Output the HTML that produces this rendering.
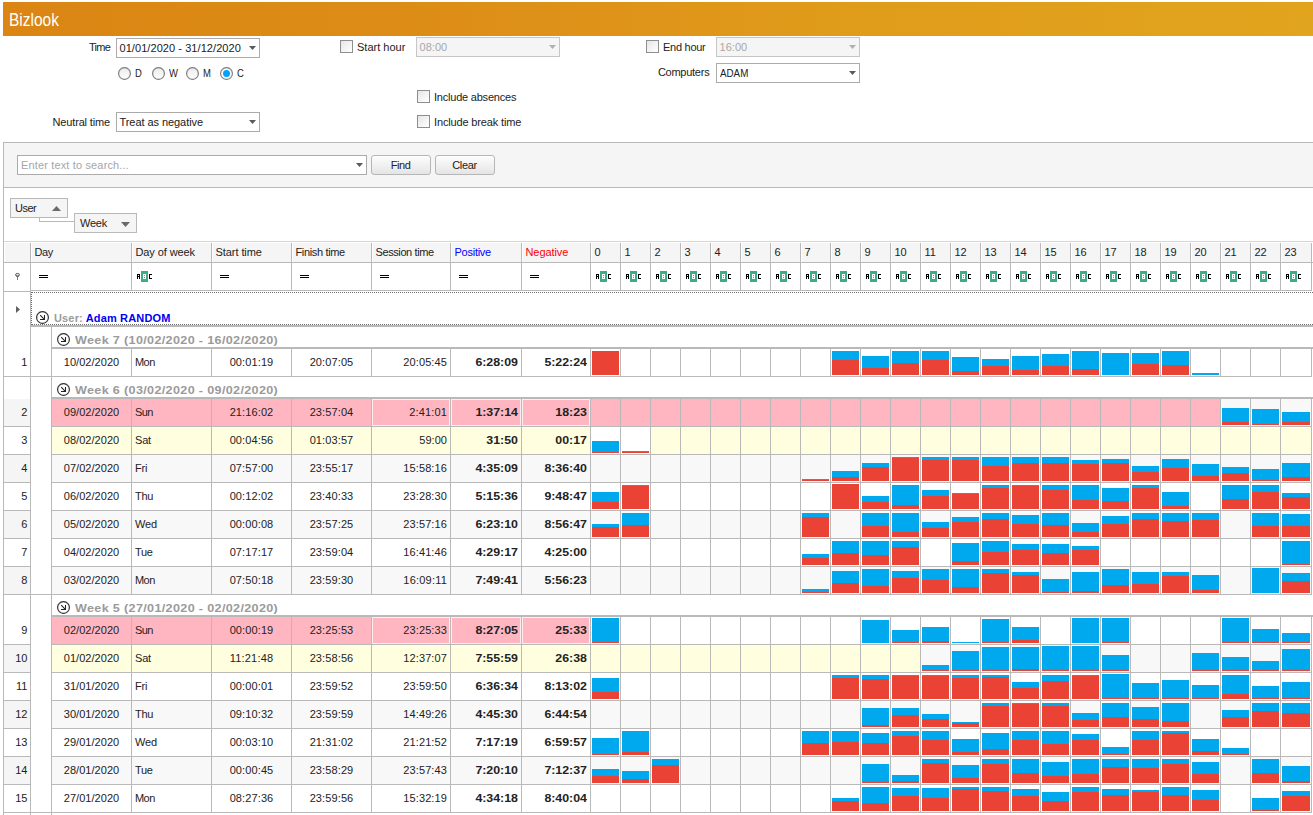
<!DOCTYPE html>
<html><head><meta charset="utf-8"><title>Bizlook</title>
<style>
html,body{margin:0;padding:0;background:#fff;}
body{width:1313px;height:815px;overflow:hidden;position:relative;font-family:"Liberation Sans",sans-serif;font-size:11px;color:#222;}
div,svg.a{position:absolute;}
.t{white-space:nowrap;overflow:visible;}
.b{transform:scaleX(1.124);transform-origin:100% 50%;}
.gw{transform:scaleX(1.144);transform-origin:0 50%;letter-spacing:.3px;}
</style></head><body>
<div style="left:3px;top:2px;width:1310px;height:34px;background:linear-gradient(90deg,#da8514 0%,#dd8e17 35%,#e09c1b 65%,#e1a41d 100%)"></div>
<div class="t" style="left:9.3px;top:8.6px;width:120px;height:22px;line-height:22px;color:#fff;font-size:17.5px;transform:scaleX(.885);transform-origin:0 50%">Bizlook</div>
<div class="t" style="left:60px;top:37px;width:50px;height:20px;line-height:20px;text-align:right;letter-spacing:-0.762px">Time</div>
<div style="left:116px;top:38px;width:144px;height:20px;background:#fff;border:1px solid #ababab;box-sizing:border-box"></div>
<div class="t" style="left:119.5px;top:38px;width:124px;height:20px;line-height:20px;color:#202020;letter-spacing:0.066px">01/01/2020 - 31/12/2020</div>
<svg class="a" style="left:249px;top:46px" width="7" height="4" viewBox="0 0 7 4"><path d="M0 0H7L3.5 4Z" fill="#5a5a5a"/></svg>
<svg class="a" style="left:118px;top:67px" width="13" height="13" viewBox="0 0 13 13"><defs><linearGradient id="rg" x1="0" y1="0" x2="0" y2="1"><stop offset="0" stop-color="#ebebeb"/><stop offset="1" stop-color="#fff"/></linearGradient></defs><circle cx="6.5" cy="6.5" r="5.9" fill="url(#rg)" stroke="#858585" stroke-width="1.25"/></svg>
<div class="t" style="left:134.6px;top:63px;width:20px;height:20px;line-height:20px;transform:scaleX(.86);transform-origin:0 50%">D</div>
<svg class="a" style="left:152px;top:67px" width="13" height="13" viewBox="0 0 13 13"><defs><linearGradient id="rg" x1="0" y1="0" x2="0" y2="1"><stop offset="0" stop-color="#ebebeb"/><stop offset="1" stop-color="#fff"/></linearGradient></defs><circle cx="6.5" cy="6.5" r="5.9" fill="url(#rg)" stroke="#858585" stroke-width="1.25"/></svg>
<div class="t" style="left:168.6px;top:63px;width:20px;height:20px;line-height:20px;transform:scaleX(.86);transform-origin:0 50%">W</div>
<svg class="a" style="left:186px;top:67px" width="13" height="13" viewBox="0 0 13 13"><defs><linearGradient id="rg" x1="0" y1="0" x2="0" y2="1"><stop offset="0" stop-color="#ebebeb"/><stop offset="1" stop-color="#fff"/></linearGradient></defs><circle cx="6.5" cy="6.5" r="5.9" fill="url(#rg)" stroke="#858585" stroke-width="1.25"/></svg>
<div class="t" style="left:202.6px;top:63px;width:20px;height:20px;line-height:20px;transform:scaleX(.86);transform-origin:0 50%">M</div>
<svg class="a" style="left:220px;top:67px" width="13" height="13" viewBox="0 0 13 13"><defs><linearGradient id="rg" x1="0" y1="0" x2="0" y2="1"><stop offset="0" stop-color="#ebebeb"/><stop offset="1" stop-color="#fff"/></linearGradient></defs><circle cx="6.5" cy="6.5" r="5.9" fill="#fff" stroke="#858585" stroke-width="1.25"/><circle cx="6.5" cy="6.5" r="3.5" fill="#00a2ff"/></svg>
<div class="t" style="left:236.6px;top:63px;width:20px;height:20px;line-height:20px;transform:scaleX(.86);transform-origin:0 50%">C</div>
<div class="t" style="left:30px;top:112px;width:80px;height:20px;line-height:20px;text-align:right;letter-spacing:-0.150px">Neutral time</div>
<div style="left:116px;top:112px;width:144px;height:20px;background:#fff;border:1px solid #ababab;box-sizing:border-box"></div>
<div class="t" style="left:119.5px;top:112px;width:124px;height:20px;line-height:20px;color:#202020;letter-spacing:-0.064px">Treat as negative</div>
<svg class="a" style="left:249px;top:120px" width="7" height="4" viewBox="0 0 7 4"><path d="M0 0H7L3.5 4Z" fill="#5a5a5a"/></svg>
<div style="left:340px;top:40px;width:13px;height:13px;box-sizing:border-box;border:1px solid #8e8e8e;background:linear-gradient(135deg,#e6e6e6 0%,#f4f4f4 55%,#fff 100%)"></div>
<div class="t" style="left:357px;top:37px;width:60px;height:20px;line-height:20px;;letter-spacing:-0.001px">Start hour</div>
<div style="left:416px;top:37px;width:144px;height:20px;background:#f5f5f5;border:1px solid #c6c6c6;box-sizing:border-box"></div>
<div class="t" style="left:419.5px;top:37px;width:124px;height:20px;line-height:20px;color:#a8a8a8;letter-spacing:0.034px">08:00</div>
<svg class="a" style="left:549px;top:45px" width="7" height="4" viewBox="0 0 7 4"><path d="M0 0H7L3.5 4Z" fill="#b0b0b0"/></svg>
<div style="left:417px;top:90px;width:13px;height:13px;box-sizing:border-box;border:1px solid #8e8e8e;background:linear-gradient(135deg,#e6e6e6 0%,#f4f4f4 55%,#fff 100%)"></div>
<div class="t" style="left:434px;top:87px;width:120px;height:20px;line-height:20px;;letter-spacing:-0.214px">Include absences</div>
<div style="left:417px;top:115px;width:13px;height:13px;box-sizing:border-box;border:1px solid #8e8e8e;background:linear-gradient(135deg,#e6e6e6 0%,#f4f4f4 55%,#fff 100%)"></div>
<div class="t" style="left:434px;top:112px;width:120px;height:20px;line-height:20px;;letter-spacing:-0.149px">Include break time</div>
<div style="left:646px;top:40px;width:13px;height:13px;box-sizing:border-box;border:1px solid #8e8e8e;background:linear-gradient(135deg,#e6e6e6 0%,#f4f4f4 55%,#fff 100%)"></div>
<div class="t" style="left:663px;top:37px;width:60px;height:20px;line-height:20px;;letter-spacing:-0.270px">End hour</div>
<div style="left:716px;top:37px;width:144px;height:20px;background:#f5f5f5;border:1px solid #c6c6c6;box-sizing:border-box"></div>
<div class="t" style="left:719.5px;top:37px;width:124px;height:20px;line-height:20px;color:#a8a8a8;letter-spacing:0.034px">16:00</div>
<svg class="a" style="left:849px;top:45px" width="7" height="4" viewBox="0 0 7 4"><path d="M0 0H7L3.5 4Z" fill="#b0b0b0"/></svg>
<div class="t" style="left:639.4px;top:62px;width:70px;height:20px;line-height:20px;text-align:right;letter-spacing:-0.255px">Computers</div>
<div style="left:716px;top:63px;width:144px;height:20px;background:#fff;border:1px solid #ababab;box-sizing:border-box"></div>
<div class="t" style="left:719.5px;top:63px;width:124px;height:20px;line-height:20px;color:#202020;letter-spacing:0;transform:scaleX(.89);transform-origin:0 50%">ADAM</div>
<svg class="a" style="left:849px;top:71px" width="7" height="4" viewBox="0 0 7 4"><path d="M0 0H7L3.5 4Z" fill="#5a5a5a"/></svg>
<div style="left:4px;top:143px;width:1309px;height:44px;background:#f5f5f5"></div>
<div style="left:3px;top:142px;width:1310px;height:1px;background:#b9b9b9"></div>
<div style="left:3px;top:187px;width:1310px;height:1px;background:#b9b9b9"></div>
<div style="left:3px;top:142px;width:1px;height:673px;background:#b9b9b9"></div>
<div style="left:17px;top:155px;width:350px;height:20px;background:#fff;border:1px solid #ababab;box-sizing:border-box"></div>
<div class="t" style="left:21px;top:155px;width:300px;height:20px;line-height:20px;color:#a6a6a6;letter-spacing:0.149px">Enter text to search...</div>
<svg class="a" style="left:356px;top:163px" width="7" height="4" viewBox="0 0 7 4"><path d="M0 0H7L3.5 4Z" fill="#5a5a5a"/></svg>
<div style="left:371px;top:155px;width:60px;height:20px;box-sizing:border-box;border:1px solid #b6b6b6;border-radius:3px;background:linear-gradient(180deg,#fdfdfd 0%,#f0f0f0 55%,#e4e4e4 100%)"></div>
<div class="t" style="left:370.5px;top:155px;width:60px;height:20px;line-height:20px;text-align:center;letter-spacing:-0.427px">Find</div>
<div style="left:435px;top:155px;width:60px;height:20px;box-sizing:border-box;border:1px solid #b6b6b6;border-radius:3px;background:linear-gradient(180deg,#fdfdfd 0%,#f0f0f0 55%,#e4e4e4 100%)"></div>
<div class="t" style="left:434.5px;top:155px;width:60px;height:20px;line-height:20px;text-align:center;letter-spacing:-0.379px">Clear</div>
<div style="left:39px;top:218px;width:1px;height:4px;background:#b9b9b9"></div>
<div style="left:39px;top:221px;width:35px;height:1px;background:#b9b9b9"></div>
<div style="left:10px;top:198px;width:58px;height:20px;box-sizing:border-box;border:1px solid #b9b9b9;background:#f5f5f5"></div>
<div class="t" style="left:15px;top:198px;width:40px;height:20px;line-height:20px;;letter-spacing:-0.509px">User</div>
<svg class="a" style="left:52px;top:206px" width="9" height="5" viewBox="0 0 9 5"><path d="M0 5H9L4.5 0Z" fill="#6a6a6a"/></svg>
<div style="left:74px;top:213px;width:63px;height:20px;box-sizing:border-box;border:1px solid #b9b9b9;background:#f5f5f5"></div>
<div class="t" style="left:80px;top:213px;width:40px;height:20px;line-height:20px;;letter-spacing:-0.255px">Week</div>
<svg class="a" style="left:121px;top:222px" width="9" height="5" viewBox="0 0 9 5"><path d="M0 0H9L4.5 5Z" fill="#6a6a6a"/></svg>
<div style="left:5px;top:243px;width:1306px;height:19px;background:#f5f5f5"></div>
<div style="left:4px;top:241px;width:1309px;height:1px;background:#d6d6d6"></div>
<div style="left:4px;top:262px;width:1309px;height:1px;background:#b9b9b9"></div>
<div style="left:30px;top:243px;width:1px;height:572px;background:#b9b9b9"></div>
<div style="left:131px;top:243px;width:1px;height:48px;background:#b9b9b9"></div>
<div style="left:31px;top:243px;width:1px;height:19px;background:#fff"></div>
<div class="t" style="left:34.5px;top:242px;width:96px;height:20px;line-height:20px;;letter-spacing:-0.454px">Day</div>
<div style="left:211px;top:243px;width:1px;height:48px;background:#b9b9b9"></div>
<div style="left:132px;top:243px;width:1px;height:19px;background:#fff"></div>
<div class="t" style="left:135.5px;top:242px;width:75px;height:20px;line-height:20px;;letter-spacing:-0.094px">Day of week</div>
<div style="left:291px;top:243px;width:1px;height:48px;background:#b9b9b9"></div>
<div style="left:212px;top:243px;width:1px;height:19px;background:#fff"></div>
<div class="t" style="left:215.5px;top:242px;width:75px;height:20px;line-height:20px;;letter-spacing:-0.068px">Start time</div>
<div style="left:371px;top:243px;width:1px;height:48px;background:#b9b9b9"></div>
<div style="left:292px;top:243px;width:1px;height:19px;background:#fff"></div>
<div class="t" style="left:295.5px;top:242px;width:75px;height:20px;line-height:20px;;letter-spacing:-0.353px">Finish time</div>
<div style="left:450px;top:243px;width:1px;height:48px;background:#b9b9b9"></div>
<div style="left:372px;top:243px;width:1px;height:19px;background:#fff"></div>
<div class="t" style="left:375.5px;top:242px;width:74px;height:20px;line-height:20px;;letter-spacing:-0.399px">Session time</div>
<div style="left:521px;top:243px;width:1px;height:48px;background:#b9b9b9"></div>
<div style="left:451px;top:243px;width:1px;height:19px;background:#fff"></div>
<div class="t" style="left:454.5px;top:242px;width:66px;height:20px;line-height:20px;color:#0000ff;letter-spacing:-0.254px">Positive</div>
<div style="left:590px;top:243px;width:1px;height:48px;background:#b9b9b9"></div>
<div style="left:522px;top:243px;width:1px;height:19px;background:#fff"></div>
<div class="t" style="left:525.5px;top:242px;width:64px;height:20px;line-height:20px;color:#ff0000;letter-spacing:-0.090px">Negative</div>
<div style="left:620px;top:243px;width:1px;height:48px;background:#b9b9b9"></div>
<div style="left:591px;top:243px;width:1px;height:19px;background:#fff"></div>
<div class="t" style="left:594.5px;top:242px;width:25px;height:20px;line-height:20px;">0</div>
<div style="left:650px;top:243px;width:1px;height:48px;background:#b9b9b9"></div>
<div style="left:621px;top:243px;width:1px;height:19px;background:#fff"></div>
<div class="t" style="left:624.5px;top:242px;width:25px;height:20px;line-height:20px;">1</div>
<div style="left:680px;top:243px;width:1px;height:48px;background:#b9b9b9"></div>
<div style="left:651px;top:243px;width:1px;height:19px;background:#fff"></div>
<div class="t" style="left:654.5px;top:242px;width:25px;height:20px;line-height:20px;">2</div>
<div style="left:710px;top:243px;width:1px;height:48px;background:#b9b9b9"></div>
<div style="left:681px;top:243px;width:1px;height:19px;background:#fff"></div>
<div class="t" style="left:684.5px;top:242px;width:25px;height:20px;line-height:20px;">3</div>
<div style="left:740px;top:243px;width:1px;height:48px;background:#b9b9b9"></div>
<div style="left:711px;top:243px;width:1px;height:19px;background:#fff"></div>
<div class="t" style="left:714.5px;top:242px;width:25px;height:20px;line-height:20px;">4</div>
<div style="left:770px;top:243px;width:1px;height:48px;background:#b9b9b9"></div>
<div style="left:741px;top:243px;width:1px;height:19px;background:#fff"></div>
<div class="t" style="left:744.5px;top:242px;width:25px;height:20px;line-height:20px;">5</div>
<div style="left:800px;top:243px;width:1px;height:48px;background:#b9b9b9"></div>
<div style="left:771px;top:243px;width:1px;height:19px;background:#fff"></div>
<div class="t" style="left:774.5px;top:242px;width:25px;height:20px;line-height:20px;">6</div>
<div style="left:830px;top:243px;width:1px;height:48px;background:#b9b9b9"></div>
<div style="left:801px;top:243px;width:1px;height:19px;background:#fff"></div>
<div class="t" style="left:804.5px;top:242px;width:25px;height:20px;line-height:20px;">7</div>
<div style="left:860px;top:243px;width:1px;height:48px;background:#b9b9b9"></div>
<div style="left:831px;top:243px;width:1px;height:19px;background:#fff"></div>
<div class="t" style="left:834.5px;top:242px;width:25px;height:20px;line-height:20px;">8</div>
<div style="left:890px;top:243px;width:1px;height:48px;background:#b9b9b9"></div>
<div style="left:861px;top:243px;width:1px;height:19px;background:#fff"></div>
<div class="t" style="left:864.5px;top:242px;width:25px;height:20px;line-height:20px;">9</div>
<div style="left:920px;top:243px;width:1px;height:48px;background:#b9b9b9"></div>
<div style="left:891px;top:243px;width:1px;height:19px;background:#fff"></div>
<div class="t" style="left:894.5px;top:242px;width:25px;height:20px;line-height:20px;">10</div>
<div style="left:950px;top:243px;width:1px;height:48px;background:#b9b9b9"></div>
<div style="left:921px;top:243px;width:1px;height:19px;background:#fff"></div>
<div class="t" style="left:924.5px;top:242px;width:25px;height:20px;line-height:20px;">11</div>
<div style="left:980px;top:243px;width:1px;height:48px;background:#b9b9b9"></div>
<div style="left:951px;top:243px;width:1px;height:19px;background:#fff"></div>
<div class="t" style="left:954.5px;top:242px;width:25px;height:20px;line-height:20px;">12</div>
<div style="left:1010px;top:243px;width:1px;height:48px;background:#b9b9b9"></div>
<div style="left:981px;top:243px;width:1px;height:19px;background:#fff"></div>
<div class="t" style="left:984.5px;top:242px;width:25px;height:20px;line-height:20px;">13</div>
<div style="left:1040px;top:243px;width:1px;height:48px;background:#b9b9b9"></div>
<div style="left:1011px;top:243px;width:1px;height:19px;background:#fff"></div>
<div class="t" style="left:1014.5px;top:242px;width:25px;height:20px;line-height:20px;">14</div>
<div style="left:1070px;top:243px;width:1px;height:48px;background:#b9b9b9"></div>
<div style="left:1041px;top:243px;width:1px;height:19px;background:#fff"></div>
<div class="t" style="left:1044.5px;top:242px;width:25px;height:20px;line-height:20px;">15</div>
<div style="left:1100px;top:243px;width:1px;height:48px;background:#b9b9b9"></div>
<div style="left:1071px;top:243px;width:1px;height:19px;background:#fff"></div>
<div class="t" style="left:1074.5px;top:242px;width:25px;height:20px;line-height:20px;">16</div>
<div style="left:1130px;top:243px;width:1px;height:48px;background:#b9b9b9"></div>
<div style="left:1101px;top:243px;width:1px;height:19px;background:#fff"></div>
<div class="t" style="left:1104.5px;top:242px;width:25px;height:20px;line-height:20px;">17</div>
<div style="left:1160px;top:243px;width:1px;height:48px;background:#b9b9b9"></div>
<div style="left:1131px;top:243px;width:1px;height:19px;background:#fff"></div>
<div class="t" style="left:1134.5px;top:242px;width:25px;height:20px;line-height:20px;">18</div>
<div style="left:1190px;top:243px;width:1px;height:48px;background:#b9b9b9"></div>
<div style="left:1161px;top:243px;width:1px;height:19px;background:#fff"></div>
<div class="t" style="left:1164.5px;top:242px;width:25px;height:20px;line-height:20px;">19</div>
<div style="left:1220px;top:243px;width:1px;height:48px;background:#b9b9b9"></div>
<div style="left:1191px;top:243px;width:1px;height:19px;background:#fff"></div>
<div class="t" style="left:1194.5px;top:242px;width:25px;height:20px;line-height:20px;">20</div>
<div style="left:1250px;top:243px;width:1px;height:48px;background:#b9b9b9"></div>
<div style="left:1221px;top:243px;width:1px;height:19px;background:#fff"></div>
<div class="t" style="left:1224.5px;top:242px;width:25px;height:20px;line-height:20px;">21</div>
<div style="left:1280px;top:243px;width:1px;height:48px;background:#b9b9b9"></div>
<div style="left:1251px;top:243px;width:1px;height:19px;background:#fff"></div>
<div class="t" style="left:1254.5px;top:242px;width:25px;height:20px;line-height:20px;">22</div>
<div style="left:1311px;top:243px;width:1px;height:48px;background:#b9b9b9"></div>
<div style="left:1281px;top:243px;width:1px;height:19px;background:#fff"></div>
<div class="t" style="left:1284.5px;top:242px;width:26px;height:20px;line-height:20px;">23</div>
<div style="left:31px;top:290px;width:1281px;height:1px;background:#b9b9b9"></div>
<div style="left:4px;top:291px;width:26px;height:1px;background:#b9b9b9"></div>
<svg class="a" style="left:14px;top:272px" width="7" height="9" viewBox="0 0 7 9"><path d="M1.2 3.2H5.8L3.9 5.3V8H3.1V5.3Z" fill="#606060"/><ellipse cx="3.5" cy="2.7" rx="2.0" ry="1.3" fill="#e4e4e4" stroke="#5c5c5c" stroke-width="1"/></svg>
<div style="left:39px;top:275px;width:9px;height:1px;background:#000"></div>
<div style="left:39px;top:277px;width:9px;height:1px;background:#000"></div>
<svg class="a" style="left:137px;top:271px" width="15" height="11" viewBox="0 0 15 11" shape-rendering="crispEdges"><rect x="4" y="0" width="7" height="11" rx="1" fill="#3fab87"/><g fill="#000"><rect x="0" y="3" width="3" height="1"/><rect x="0" y="5" width="3" height="1"/><rect x="0" y="3" width="1" height="5"/><rect x="2" y="3" width="1" height="5"/><rect x="12" y="3" width="3" height="1"/><rect x="12" y="7" width="3" height="1"/><rect x="12" y="3" width="1" height="5"/></g><g fill="#fff"><rect x="6" y="3" width="3" height="5"/></g><g fill="#3fab87"><rect x="7" y="4" width="1" height="1"/><rect x="7" y="6" width="1" height="1"/></g></svg>
<div style="left:220px;top:275px;width:9px;height:1px;background:#000"></div>
<div style="left:220px;top:277px;width:9px;height:1px;background:#000"></div>
<div style="left:300px;top:275px;width:9px;height:1px;background:#000"></div>
<div style="left:300px;top:277px;width:9px;height:1px;background:#000"></div>
<div style="left:380px;top:275px;width:9px;height:1px;background:#000"></div>
<div style="left:380px;top:277px;width:9px;height:1px;background:#000"></div>
<div style="left:459px;top:275px;width:9px;height:1px;background:#000"></div>
<div style="left:459px;top:277px;width:9px;height:1px;background:#000"></div>
<div style="left:530px;top:275px;width:9px;height:1px;background:#000"></div>
<div style="left:530px;top:277px;width:9px;height:1px;background:#000"></div>
<svg class="a" style="left:596px;top:271px" width="15" height="11" viewBox="0 0 15 11" shape-rendering="crispEdges"><rect x="4" y="0" width="7" height="11" rx="1" fill="#3fab87"/><g fill="#000"><rect x="0" y="3" width="3" height="1"/><rect x="0" y="5" width="3" height="1"/><rect x="0" y="3" width="1" height="5"/><rect x="2" y="3" width="1" height="5"/><rect x="12" y="3" width="3" height="1"/><rect x="12" y="7" width="3" height="1"/><rect x="12" y="3" width="1" height="5"/></g><g fill="#fff"><rect x="6" y="3" width="3" height="5"/></g><g fill="#3fab87"><rect x="7" y="4" width="1" height="1"/><rect x="7" y="6" width="1" height="1"/></g></svg>
<svg class="a" style="left:626px;top:271px" width="15" height="11" viewBox="0 0 15 11" shape-rendering="crispEdges"><rect x="4" y="0" width="7" height="11" rx="1" fill="#3fab87"/><g fill="#000"><rect x="0" y="3" width="3" height="1"/><rect x="0" y="5" width="3" height="1"/><rect x="0" y="3" width="1" height="5"/><rect x="2" y="3" width="1" height="5"/><rect x="12" y="3" width="3" height="1"/><rect x="12" y="7" width="3" height="1"/><rect x="12" y="3" width="1" height="5"/></g><g fill="#fff"><rect x="6" y="3" width="3" height="5"/></g><g fill="#3fab87"><rect x="7" y="4" width="1" height="1"/><rect x="7" y="6" width="1" height="1"/></g></svg>
<svg class="a" style="left:656px;top:271px" width="15" height="11" viewBox="0 0 15 11" shape-rendering="crispEdges"><rect x="4" y="0" width="7" height="11" rx="1" fill="#3fab87"/><g fill="#000"><rect x="0" y="3" width="3" height="1"/><rect x="0" y="5" width="3" height="1"/><rect x="0" y="3" width="1" height="5"/><rect x="2" y="3" width="1" height="5"/><rect x="12" y="3" width="3" height="1"/><rect x="12" y="7" width="3" height="1"/><rect x="12" y="3" width="1" height="5"/></g><g fill="#fff"><rect x="6" y="3" width="3" height="5"/></g><g fill="#3fab87"><rect x="7" y="4" width="1" height="1"/><rect x="7" y="6" width="1" height="1"/></g></svg>
<svg class="a" style="left:686px;top:271px" width="15" height="11" viewBox="0 0 15 11" shape-rendering="crispEdges"><rect x="4" y="0" width="7" height="11" rx="1" fill="#3fab87"/><g fill="#000"><rect x="0" y="3" width="3" height="1"/><rect x="0" y="5" width="3" height="1"/><rect x="0" y="3" width="1" height="5"/><rect x="2" y="3" width="1" height="5"/><rect x="12" y="3" width="3" height="1"/><rect x="12" y="7" width="3" height="1"/><rect x="12" y="3" width="1" height="5"/></g><g fill="#fff"><rect x="6" y="3" width="3" height="5"/></g><g fill="#3fab87"><rect x="7" y="4" width="1" height="1"/><rect x="7" y="6" width="1" height="1"/></g></svg>
<svg class="a" style="left:716px;top:271px" width="15" height="11" viewBox="0 0 15 11" shape-rendering="crispEdges"><rect x="4" y="0" width="7" height="11" rx="1" fill="#3fab87"/><g fill="#000"><rect x="0" y="3" width="3" height="1"/><rect x="0" y="5" width="3" height="1"/><rect x="0" y="3" width="1" height="5"/><rect x="2" y="3" width="1" height="5"/><rect x="12" y="3" width="3" height="1"/><rect x="12" y="7" width="3" height="1"/><rect x="12" y="3" width="1" height="5"/></g><g fill="#fff"><rect x="6" y="3" width="3" height="5"/></g><g fill="#3fab87"><rect x="7" y="4" width="1" height="1"/><rect x="7" y="6" width="1" height="1"/></g></svg>
<svg class="a" style="left:746px;top:271px" width="15" height="11" viewBox="0 0 15 11" shape-rendering="crispEdges"><rect x="4" y="0" width="7" height="11" rx="1" fill="#3fab87"/><g fill="#000"><rect x="0" y="3" width="3" height="1"/><rect x="0" y="5" width="3" height="1"/><rect x="0" y="3" width="1" height="5"/><rect x="2" y="3" width="1" height="5"/><rect x="12" y="3" width="3" height="1"/><rect x="12" y="7" width="3" height="1"/><rect x="12" y="3" width="1" height="5"/></g><g fill="#fff"><rect x="6" y="3" width="3" height="5"/></g><g fill="#3fab87"><rect x="7" y="4" width="1" height="1"/><rect x="7" y="6" width="1" height="1"/></g></svg>
<svg class="a" style="left:776px;top:271px" width="15" height="11" viewBox="0 0 15 11" shape-rendering="crispEdges"><rect x="4" y="0" width="7" height="11" rx="1" fill="#3fab87"/><g fill="#000"><rect x="0" y="3" width="3" height="1"/><rect x="0" y="5" width="3" height="1"/><rect x="0" y="3" width="1" height="5"/><rect x="2" y="3" width="1" height="5"/><rect x="12" y="3" width="3" height="1"/><rect x="12" y="7" width="3" height="1"/><rect x="12" y="3" width="1" height="5"/></g><g fill="#fff"><rect x="6" y="3" width="3" height="5"/></g><g fill="#3fab87"><rect x="7" y="4" width="1" height="1"/><rect x="7" y="6" width="1" height="1"/></g></svg>
<svg class="a" style="left:806px;top:271px" width="15" height="11" viewBox="0 0 15 11" shape-rendering="crispEdges"><rect x="4" y="0" width="7" height="11" rx="1" fill="#3fab87"/><g fill="#000"><rect x="0" y="3" width="3" height="1"/><rect x="0" y="5" width="3" height="1"/><rect x="0" y="3" width="1" height="5"/><rect x="2" y="3" width="1" height="5"/><rect x="12" y="3" width="3" height="1"/><rect x="12" y="7" width="3" height="1"/><rect x="12" y="3" width="1" height="5"/></g><g fill="#fff"><rect x="6" y="3" width="3" height="5"/></g><g fill="#3fab87"><rect x="7" y="4" width="1" height="1"/><rect x="7" y="6" width="1" height="1"/></g></svg>
<svg class="a" style="left:836px;top:271px" width="15" height="11" viewBox="0 0 15 11" shape-rendering="crispEdges"><rect x="4" y="0" width="7" height="11" rx="1" fill="#3fab87"/><g fill="#000"><rect x="0" y="3" width="3" height="1"/><rect x="0" y="5" width="3" height="1"/><rect x="0" y="3" width="1" height="5"/><rect x="2" y="3" width="1" height="5"/><rect x="12" y="3" width="3" height="1"/><rect x="12" y="7" width="3" height="1"/><rect x="12" y="3" width="1" height="5"/></g><g fill="#fff"><rect x="6" y="3" width="3" height="5"/></g><g fill="#3fab87"><rect x="7" y="4" width="1" height="1"/><rect x="7" y="6" width="1" height="1"/></g></svg>
<svg class="a" style="left:866px;top:271px" width="15" height="11" viewBox="0 0 15 11" shape-rendering="crispEdges"><rect x="4" y="0" width="7" height="11" rx="1" fill="#3fab87"/><g fill="#000"><rect x="0" y="3" width="3" height="1"/><rect x="0" y="5" width="3" height="1"/><rect x="0" y="3" width="1" height="5"/><rect x="2" y="3" width="1" height="5"/><rect x="12" y="3" width="3" height="1"/><rect x="12" y="7" width="3" height="1"/><rect x="12" y="3" width="1" height="5"/></g><g fill="#fff"><rect x="6" y="3" width="3" height="5"/></g><g fill="#3fab87"><rect x="7" y="4" width="1" height="1"/><rect x="7" y="6" width="1" height="1"/></g></svg>
<svg class="a" style="left:896px;top:271px" width="15" height="11" viewBox="0 0 15 11" shape-rendering="crispEdges"><rect x="4" y="0" width="7" height="11" rx="1" fill="#3fab87"/><g fill="#000"><rect x="0" y="3" width="3" height="1"/><rect x="0" y="5" width="3" height="1"/><rect x="0" y="3" width="1" height="5"/><rect x="2" y="3" width="1" height="5"/><rect x="12" y="3" width="3" height="1"/><rect x="12" y="7" width="3" height="1"/><rect x="12" y="3" width="1" height="5"/></g><g fill="#fff"><rect x="6" y="3" width="3" height="5"/></g><g fill="#3fab87"><rect x="7" y="4" width="1" height="1"/><rect x="7" y="6" width="1" height="1"/></g></svg>
<svg class="a" style="left:926px;top:271px" width="15" height="11" viewBox="0 0 15 11" shape-rendering="crispEdges"><rect x="4" y="0" width="7" height="11" rx="1" fill="#3fab87"/><g fill="#000"><rect x="0" y="3" width="3" height="1"/><rect x="0" y="5" width="3" height="1"/><rect x="0" y="3" width="1" height="5"/><rect x="2" y="3" width="1" height="5"/><rect x="12" y="3" width="3" height="1"/><rect x="12" y="7" width="3" height="1"/><rect x="12" y="3" width="1" height="5"/></g><g fill="#fff"><rect x="6" y="3" width="3" height="5"/></g><g fill="#3fab87"><rect x="7" y="4" width="1" height="1"/><rect x="7" y="6" width="1" height="1"/></g></svg>
<svg class="a" style="left:956px;top:271px" width="15" height="11" viewBox="0 0 15 11" shape-rendering="crispEdges"><rect x="4" y="0" width="7" height="11" rx="1" fill="#3fab87"/><g fill="#000"><rect x="0" y="3" width="3" height="1"/><rect x="0" y="5" width="3" height="1"/><rect x="0" y="3" width="1" height="5"/><rect x="2" y="3" width="1" height="5"/><rect x="12" y="3" width="3" height="1"/><rect x="12" y="7" width="3" height="1"/><rect x="12" y="3" width="1" height="5"/></g><g fill="#fff"><rect x="6" y="3" width="3" height="5"/></g><g fill="#3fab87"><rect x="7" y="4" width="1" height="1"/><rect x="7" y="6" width="1" height="1"/></g></svg>
<svg class="a" style="left:986px;top:271px" width="15" height="11" viewBox="0 0 15 11" shape-rendering="crispEdges"><rect x="4" y="0" width="7" height="11" rx="1" fill="#3fab87"/><g fill="#000"><rect x="0" y="3" width="3" height="1"/><rect x="0" y="5" width="3" height="1"/><rect x="0" y="3" width="1" height="5"/><rect x="2" y="3" width="1" height="5"/><rect x="12" y="3" width="3" height="1"/><rect x="12" y="7" width="3" height="1"/><rect x="12" y="3" width="1" height="5"/></g><g fill="#fff"><rect x="6" y="3" width="3" height="5"/></g><g fill="#3fab87"><rect x="7" y="4" width="1" height="1"/><rect x="7" y="6" width="1" height="1"/></g></svg>
<svg class="a" style="left:1016px;top:271px" width="15" height="11" viewBox="0 0 15 11" shape-rendering="crispEdges"><rect x="4" y="0" width="7" height="11" rx="1" fill="#3fab87"/><g fill="#000"><rect x="0" y="3" width="3" height="1"/><rect x="0" y="5" width="3" height="1"/><rect x="0" y="3" width="1" height="5"/><rect x="2" y="3" width="1" height="5"/><rect x="12" y="3" width="3" height="1"/><rect x="12" y="7" width="3" height="1"/><rect x="12" y="3" width="1" height="5"/></g><g fill="#fff"><rect x="6" y="3" width="3" height="5"/></g><g fill="#3fab87"><rect x="7" y="4" width="1" height="1"/><rect x="7" y="6" width="1" height="1"/></g></svg>
<svg class="a" style="left:1046px;top:271px" width="15" height="11" viewBox="0 0 15 11" shape-rendering="crispEdges"><rect x="4" y="0" width="7" height="11" rx="1" fill="#3fab87"/><g fill="#000"><rect x="0" y="3" width="3" height="1"/><rect x="0" y="5" width="3" height="1"/><rect x="0" y="3" width="1" height="5"/><rect x="2" y="3" width="1" height="5"/><rect x="12" y="3" width="3" height="1"/><rect x="12" y="7" width="3" height="1"/><rect x="12" y="3" width="1" height="5"/></g><g fill="#fff"><rect x="6" y="3" width="3" height="5"/></g><g fill="#3fab87"><rect x="7" y="4" width="1" height="1"/><rect x="7" y="6" width="1" height="1"/></g></svg>
<svg class="a" style="left:1076px;top:271px" width="15" height="11" viewBox="0 0 15 11" shape-rendering="crispEdges"><rect x="4" y="0" width="7" height="11" rx="1" fill="#3fab87"/><g fill="#000"><rect x="0" y="3" width="3" height="1"/><rect x="0" y="5" width="3" height="1"/><rect x="0" y="3" width="1" height="5"/><rect x="2" y="3" width="1" height="5"/><rect x="12" y="3" width="3" height="1"/><rect x="12" y="7" width="3" height="1"/><rect x="12" y="3" width="1" height="5"/></g><g fill="#fff"><rect x="6" y="3" width="3" height="5"/></g><g fill="#3fab87"><rect x="7" y="4" width="1" height="1"/><rect x="7" y="6" width="1" height="1"/></g></svg>
<svg class="a" style="left:1106px;top:271px" width="15" height="11" viewBox="0 0 15 11" shape-rendering="crispEdges"><rect x="4" y="0" width="7" height="11" rx="1" fill="#3fab87"/><g fill="#000"><rect x="0" y="3" width="3" height="1"/><rect x="0" y="5" width="3" height="1"/><rect x="0" y="3" width="1" height="5"/><rect x="2" y="3" width="1" height="5"/><rect x="12" y="3" width="3" height="1"/><rect x="12" y="7" width="3" height="1"/><rect x="12" y="3" width="1" height="5"/></g><g fill="#fff"><rect x="6" y="3" width="3" height="5"/></g><g fill="#3fab87"><rect x="7" y="4" width="1" height="1"/><rect x="7" y="6" width="1" height="1"/></g></svg>
<svg class="a" style="left:1136px;top:271px" width="15" height="11" viewBox="0 0 15 11" shape-rendering="crispEdges"><rect x="4" y="0" width="7" height="11" rx="1" fill="#3fab87"/><g fill="#000"><rect x="0" y="3" width="3" height="1"/><rect x="0" y="5" width="3" height="1"/><rect x="0" y="3" width="1" height="5"/><rect x="2" y="3" width="1" height="5"/><rect x="12" y="3" width="3" height="1"/><rect x="12" y="7" width="3" height="1"/><rect x="12" y="3" width="1" height="5"/></g><g fill="#fff"><rect x="6" y="3" width="3" height="5"/></g><g fill="#3fab87"><rect x="7" y="4" width="1" height="1"/><rect x="7" y="6" width="1" height="1"/></g></svg>
<svg class="a" style="left:1166px;top:271px" width="15" height="11" viewBox="0 0 15 11" shape-rendering="crispEdges"><rect x="4" y="0" width="7" height="11" rx="1" fill="#3fab87"/><g fill="#000"><rect x="0" y="3" width="3" height="1"/><rect x="0" y="5" width="3" height="1"/><rect x="0" y="3" width="1" height="5"/><rect x="2" y="3" width="1" height="5"/><rect x="12" y="3" width="3" height="1"/><rect x="12" y="7" width="3" height="1"/><rect x="12" y="3" width="1" height="5"/></g><g fill="#fff"><rect x="6" y="3" width="3" height="5"/></g><g fill="#3fab87"><rect x="7" y="4" width="1" height="1"/><rect x="7" y="6" width="1" height="1"/></g></svg>
<svg class="a" style="left:1196px;top:271px" width="15" height="11" viewBox="0 0 15 11" shape-rendering="crispEdges"><rect x="4" y="0" width="7" height="11" rx="1" fill="#3fab87"/><g fill="#000"><rect x="0" y="3" width="3" height="1"/><rect x="0" y="5" width="3" height="1"/><rect x="0" y="3" width="1" height="5"/><rect x="2" y="3" width="1" height="5"/><rect x="12" y="3" width="3" height="1"/><rect x="12" y="7" width="3" height="1"/><rect x="12" y="3" width="1" height="5"/></g><g fill="#fff"><rect x="6" y="3" width="3" height="5"/></g><g fill="#3fab87"><rect x="7" y="4" width="1" height="1"/><rect x="7" y="6" width="1" height="1"/></g></svg>
<svg class="a" style="left:1226px;top:271px" width="15" height="11" viewBox="0 0 15 11" shape-rendering="crispEdges"><rect x="4" y="0" width="7" height="11" rx="1" fill="#3fab87"/><g fill="#000"><rect x="0" y="3" width="3" height="1"/><rect x="0" y="5" width="3" height="1"/><rect x="0" y="3" width="1" height="5"/><rect x="2" y="3" width="1" height="5"/><rect x="12" y="3" width="3" height="1"/><rect x="12" y="7" width="3" height="1"/><rect x="12" y="3" width="1" height="5"/></g><g fill="#fff"><rect x="6" y="3" width="3" height="5"/></g><g fill="#3fab87"><rect x="7" y="4" width="1" height="1"/><rect x="7" y="6" width="1" height="1"/></g></svg>
<svg class="a" style="left:1256px;top:271px" width="15" height="11" viewBox="0 0 15 11" shape-rendering="crispEdges"><rect x="4" y="0" width="7" height="11" rx="1" fill="#3fab87"/><g fill="#000"><rect x="0" y="3" width="3" height="1"/><rect x="0" y="5" width="3" height="1"/><rect x="0" y="3" width="1" height="5"/><rect x="2" y="3" width="1" height="5"/><rect x="12" y="3" width="3" height="1"/><rect x="12" y="7" width="3" height="1"/><rect x="12" y="3" width="1" height="5"/></g><g fill="#fff"><rect x="6" y="3" width="3" height="5"/></g><g fill="#3fab87"><rect x="7" y="4" width="1" height="1"/><rect x="7" y="6" width="1" height="1"/></g></svg>
<svg class="a" style="left:1286px;top:271px" width="15" height="11" viewBox="0 0 15 11" shape-rendering="crispEdges"><rect x="4" y="0" width="7" height="11" rx="1" fill="#3fab87"/><g fill="#000"><rect x="0" y="3" width="3" height="1"/><rect x="0" y="5" width="3" height="1"/><rect x="0" y="3" width="1" height="5"/><rect x="2" y="3" width="1" height="5"/><rect x="12" y="3" width="3" height="1"/><rect x="12" y="7" width="3" height="1"/><rect x="12" y="3" width="1" height="5"/></g><g fill="#fff"><rect x="6" y="3" width="3" height="5"/></g><g fill="#3fab87"><rect x="7" y="4" width="1" height="1"/><rect x="7" y="6" width="1" height="1"/></g></svg>
<svg class="a" style="left:16px;top:306px" width="4" height="7" viewBox="0 0 4 7"><path d="M0 0L4 3.5L0 7Z" fill="#606060"/></svg>
<div style="left:31px;top:292px;width:1282px;height:33px;box-sizing:border-box;border:1px dotted #6e6e6e;border-right:none"></div>
<svg class="a" style="left:36px;top:311px" width="13" height="13" viewBox="0 0 13 13"><circle cx="6.5" cy="6.5" r="5.9" fill="#fff" stroke="#3c3c3c" stroke-width="1.25"/><path d="M4.2 4.2L8.3 8.3M8.5 4V8.5H4" fill="none" stroke="#222" stroke-width="1.05"/></svg>
<div class="t gb" style="left:54px;top:308px;width:300px;height:20px;line-height:20px;font-weight:bold;letter-spacing:0.153px"><span style="color:#9c9c9c">User:</span> <span style="color:#0000f4">Adam RANDOM</span></div>
<div style="left:31px;top:325px;width:1282px;height:2px;background:#b9b9b9"></div>
<div style="left:51px;top:327px;width:1px;height:488px;background:#b9b9b9"></div>
<svg class="a" style="left:57px;top:333px" width="13" height="13" viewBox="0 0 13 13"><circle cx="6.5" cy="6.5" r="5.9" fill="#fff" stroke="#3c3c3c" stroke-width="1.25"/><path d="M4.2 4.2L8.3 8.3M8.5 4V8.5H4" fill="none" stroke="#222" stroke-width="1.05"/></svg>
<div class="t gw" style="left:75px;top:330px;width:400px;height:20px;line-height:20px;color:#9a9a9a;font-weight:bold">Week 7 (10/02/2020 - 16/02/2020)</div>
<div style="left:52px;top:347px;width:1261px;height:2px;background:#b9b9b9"></div>
<svg class="a" style="left:57px;top:383px" width="13" height="13" viewBox="0 0 13 13"><circle cx="6.5" cy="6.5" r="5.9" fill="#fff" stroke="#3c3c3c" stroke-width="1.25"/><path d="M4.2 4.2L8.3 8.3M8.5 4V8.5H4" fill="none" stroke="#222" stroke-width="1.05"/></svg>
<div class="t gw" style="left:75px;top:380px;width:400px;height:20px;line-height:20px;color:#9a9a9a;font-weight:bold">Week 6 (03/02/2020 - 09/02/2020)</div>
<div style="left:52px;top:397px;width:1261px;height:2px;background:#b9b9b9"></div>
<svg class="a" style="left:57px;top:601px" width="13" height="13" viewBox="0 0 13 13"><circle cx="6.5" cy="6.5" r="5.9" fill="#fff" stroke="#3c3c3c" stroke-width="1.25"/><path d="M4.2 4.2L8.3 8.3M8.5 4V8.5H4" fill="none" stroke="#222" stroke-width="1.05"/></svg>
<div class="t gw" style="left:75px;top:598px;width:400px;height:20px;line-height:20px;color:#9a9a9a;font-weight:bold">Week 5 (27/01/2020 - 02/02/2020)</div>
<div style="left:52px;top:615px;width:1261px;height:2px;background:#b9b9b9"></div>
<div class="t" style="left:4px;top:349px;width:23.4px;height:27px;line-height:27px;text-align:right">1</div>
<div style="left:52px;top:349px;width:538px;height:27px;background:#fff"></div>
<div style="left:591px;top:349px;width:720px;height:27px;background:#fff"></div>
<div class="t" style="left:52px;top:349px;width:79px;height:27px;line-height:27px;text-align:center;letter-spacing:0.044px">10/02/2020</div>
<div class="t" style="left:135px;top:349px;width:70px;height:27px;line-height:27px;;letter-spacing:-0.569px">Mon</div>
<div class="t" style="left:212px;top:349px;width:79px;height:27px;line-height:27px;text-align:center;letter-spacing:0.109px">00:01:19</div>
<div class="t" style="left:292px;top:349px;width:79px;height:27px;line-height:27px;text-align:center;letter-spacing:0.109px">20:07:05</div>
<div class="t" style="left:372px;top:349px;width:75px;height:27px;line-height:27px;text-align:right;letter-spacing:0.109px">20:05:45</div>
<div class="t b" style="left:451px;top:349px;width:67px;height:27px;line-height:27px;text-align:right;font-weight:bold">6:28:09</div>
<div class="t b" style="left:522px;top:349px;width:65px;height:27px;line-height:27px;text-align:right;font-weight:bold">5:22:24</div>
<div style="left:592px;top:351px;width:27px;height:24px;background:#ea4335"></div>
<div style="left:832px;top:351px;width:27px;height:9px;background:#00a9ee"></div>
<div style="left:832px;top:360px;width:27px;height:15px;background:#ea4335"></div>
<div style="left:862px;top:356px;width:27px;height:12px;background:#00a9ee"></div>
<div style="left:862px;top:368px;width:27px;height:7px;background:#ea4335"></div>
<div style="left:892px;top:351px;width:27px;height:12px;background:#00a9ee"></div>
<div style="left:892px;top:363px;width:27px;height:12px;background:#ea4335"></div>
<div style="left:922px;top:351px;width:27px;height:9px;background:#00a9ee"></div>
<div style="left:922px;top:360px;width:27px;height:15px;background:#ea4335"></div>
<div style="left:952px;top:357px;width:27px;height:14px;background:#00a9ee"></div>
<div style="left:952px;top:371px;width:27px;height:4px;background:#ea4335"></div>
<div style="left:982px;top:359px;width:27px;height:7px;background:#00a9ee"></div>
<div style="left:982px;top:366px;width:27px;height:9px;background:#ea4335"></div>
<div style="left:1012px;top:356px;width:27px;height:14px;background:#00a9ee"></div>
<div style="left:1012px;top:370px;width:27px;height:5px;background:#ea4335"></div>
<div style="left:1042px;top:354px;width:27px;height:12px;background:#00a9ee"></div>
<div style="left:1042px;top:366px;width:27px;height:9px;background:#ea4335"></div>
<div style="left:1072px;top:351px;width:27px;height:18px;background:#00a9ee"></div>
<div style="left:1072px;top:369px;width:27px;height:6px;background:#ea4335"></div>
<div style="left:1102px;top:353px;width:27px;height:22px;background:#00a9ee"></div>
<div style="left:1132px;top:353px;width:27px;height:11px;background:#00a9ee"></div>
<div style="left:1132px;top:364px;width:27px;height:11px;background:#ea4335"></div>
<div style="left:1162px;top:351px;width:27px;height:14px;background:#00a9ee"></div>
<div style="left:1162px;top:365px;width:27px;height:10px;background:#ea4335"></div>
<div style="left:1192px;top:373px;width:27px;height:2px;background:#00a9ee"></div>
<div style="left:4px;top:376px;width:1308px;height:1px;background:#b9b9b9"></div>
<div style="left:4px;top:399px;width:26px;height:27px;background:#f5f5f5"></div>
<div class="t" style="left:4px;top:399px;width:23.4px;height:27px;line-height:27px;text-align:right">2</div>
<div style="left:52px;top:399px;width:538px;height:27px;background:#ffb6c1"></div>
<div style="left:591px;top:399px;width:720px;height:27px;background:#f8f8f8"></div>
<div style="left:591px;top:399px;width:629px;height:27px;background:#ffb6c1"></div>
<div class="t" style="left:52px;top:399px;width:79px;height:27px;line-height:27px;text-align:center;letter-spacing:0.044px">09/02/2020</div>
<div class="t" style="left:135px;top:399px;width:70px;height:27px;line-height:27px;;letter-spacing:-0.593px">Sun</div>
<div class="t" style="left:212px;top:399px;width:79px;height:27px;line-height:27px;text-align:center;letter-spacing:0.109px">21:16:02</div>
<div class="t" style="left:292px;top:399px;width:79px;height:27px;line-height:27px;text-align:center;letter-spacing:0.109px">23:57:04</div>
<div class="t" style="left:372px;top:399px;width:75px;height:27px;line-height:27px;text-align:right;letter-spacing:0.142px">2:41:01</div>
<div class="t b" style="left:451px;top:399px;width:67px;height:27px;line-height:27px;text-align:right;font-weight:bold">1:37:14</div>
<div class="t b" style="left:522px;top:399px;width:65px;height:27px;line-height:27px;text-align:right;font-weight:bold">18:23</div>
<div style="left:372px;top:399px;width:78px;height:27px;box-sizing:border-box;border:1px solid rgba(255,255,255,.75)"></div>
<div style="left:451px;top:399px;width:70px;height:27px;box-sizing:border-box;border:1px solid rgba(255,255,255,.75)"></div>
<div style="left:522px;top:399px;width:68px;height:27px;box-sizing:border-box;border:1px solid rgba(255,255,255,.75)"></div>
<div style="left:1222px;top:408px;width:27px;height:14px;background:#00a9ee"></div>
<div style="left:1222px;top:422px;width:27px;height:3px;background:#ea4335"></div>
<div style="left:1252px;top:409px;width:27px;height:15px;background:#00a9ee"></div>
<div style="left:1252px;top:424px;width:27px;height:1px;background:#ea4335"></div>
<div style="left:1282px;top:412px;width:28px;height:10px;background:#00a9ee"></div>
<div style="left:1282px;top:422px;width:28px;height:3px;background:#ea4335"></div>
<div style="left:4px;top:426px;width:26px;height:1px;background:#b9b9b9"></div>
<div style="left:52px;top:426px;width:1260px;height:1px;background:#b9b9b9"></div>
<div class="t" style="left:4px;top:427px;width:23.4px;height:27px;line-height:27px;text-align:right">3</div>
<div style="left:52px;top:427px;width:538px;height:27px;background:#ffffe0"></div>
<div style="left:591px;top:427px;width:720px;height:27px;background:#fff"></div>
<div style="left:651px;top:427px;width:660px;height:27px;background:#ffffe0"></div>
<div class="t" style="left:52px;top:427px;width:79px;height:27px;line-height:27px;text-align:center;letter-spacing:0.044px">08/02/2020</div>
<div class="t" style="left:135px;top:427px;width:70px;height:27px;line-height:27px;;letter-spacing:-0.172px">Sat</div>
<div class="t" style="left:212px;top:427px;width:79px;height:27px;line-height:27px;text-align:center;letter-spacing:0.109px">00:04:56</div>
<div class="t" style="left:292px;top:427px;width:79px;height:27px;line-height:27px;text-align:center;letter-spacing:0.109px">01:03:57</div>
<div class="t" style="left:372px;top:427px;width:75px;height:27px;line-height:27px;text-align:right;letter-spacing:0.034px">59:00</div>
<div class="t b" style="left:451px;top:427px;width:67px;height:27px;line-height:27px;text-align:right;font-weight:bold">31:50</div>
<div class="t b" style="left:522px;top:427px;width:65px;height:27px;line-height:27px;text-align:right;font-weight:bold">00:17</div>
<div style="left:592px;top:441px;width:27px;height:11px;background:#00a9ee"></div>
<div style="left:592px;top:452px;width:27px;height:1px;background:#ea4335"></div>
<div style="left:622px;top:451px;width:27px;height:1px;background:#00a9ee"></div>
<div style="left:622px;top:452px;width:27px;height:1px;background:#ea4335"></div>
<div style="left:4px;top:454px;width:26px;height:1px;background:#b9b9b9"></div>
<div style="left:52px;top:454px;width:1260px;height:1px;background:#b9b9b9"></div>
<div style="left:4px;top:455px;width:26px;height:27px;background:#f5f5f5"></div>
<div class="t" style="left:4px;top:455px;width:23.4px;height:27px;line-height:27px;text-align:right">4</div>
<div style="left:52px;top:455px;width:538px;height:27px;background:#f8f8f8"></div>
<div style="left:591px;top:455px;width:720px;height:27px;background:#f8f8f8"></div>
<div class="t" style="left:52px;top:455px;width:79px;height:27px;line-height:27px;text-align:center;letter-spacing:0.044px">07/02/2020</div>
<div class="t" style="left:135px;top:455px;width:70px;height:27px;line-height:27px;;letter-spacing:-0.209px">Fri</div>
<div class="t" style="left:212px;top:455px;width:79px;height:27px;line-height:27px;text-align:center;letter-spacing:0.109px">07:57:00</div>
<div class="t" style="left:292px;top:455px;width:79px;height:27px;line-height:27px;text-align:center;letter-spacing:0.109px">23:55:17</div>
<div class="t" style="left:372px;top:455px;width:75px;height:27px;line-height:27px;text-align:right;letter-spacing:0.109px">15:58:16</div>
<div class="t b" style="left:451px;top:455px;width:67px;height:27px;line-height:27px;text-align:right;font-weight:bold">4:35:09</div>
<div class="t b" style="left:522px;top:455px;width:65px;height:27px;line-height:27px;text-align:right;font-weight:bold">8:36:40</div>
<div style="left:802px;top:479px;width:27px;height:1px;background:#00a9ee"></div>
<div style="left:802px;top:480px;width:27px;height:1px;background:#ea4335"></div>
<div style="left:832px;top:471px;width:27px;height:6px;background:#00a9ee"></div>
<div style="left:832px;top:477px;width:27px;height:4px;background:#ea4335"></div>
<div style="left:862px;top:463px;width:27px;height:4px;background:#00a9ee"></div>
<div style="left:862px;top:467px;width:27px;height:14px;background:#ea4335"></div>
<div style="left:892px;top:457px;width:27px;height:1px;background:#00a9ee"></div>
<div style="left:892px;top:458px;width:27px;height:23px;background:#ea4335"></div>
<div style="left:922px;top:457px;width:27px;height:3px;background:#00a9ee"></div>
<div style="left:922px;top:460px;width:27px;height:21px;background:#ea4335"></div>
<div style="left:952px;top:457px;width:27px;height:3px;background:#00a9ee"></div>
<div style="left:952px;top:460px;width:27px;height:21px;background:#ea4335"></div>
<div style="left:982px;top:457px;width:27px;height:9px;background:#00a9ee"></div>
<div style="left:982px;top:466px;width:27px;height:15px;background:#ea4335"></div>
<div style="left:1012px;top:457px;width:27px;height:6px;background:#00a9ee"></div>
<div style="left:1012px;top:463px;width:27px;height:18px;background:#ea4335"></div>
<div style="left:1042px;top:457px;width:27px;height:6px;background:#00a9ee"></div>
<div style="left:1042px;top:463px;width:27px;height:18px;background:#ea4335"></div>
<div style="left:1072px;top:460px;width:27px;height:4px;background:#00a9ee"></div>
<div style="left:1072px;top:464px;width:27px;height:17px;background:#ea4335"></div>
<div style="left:1102px;top:459px;width:27px;height:4px;background:#00a9ee"></div>
<div style="left:1102px;top:463px;width:27px;height:18px;background:#ea4335"></div>
<div style="left:1132px;top:466px;width:27px;height:6px;background:#00a9ee"></div>
<div style="left:1132px;top:472px;width:27px;height:9px;background:#ea4335"></div>
<div style="left:1162px;top:459px;width:27px;height:9px;background:#00a9ee"></div>
<div style="left:1162px;top:468px;width:27px;height:13px;background:#ea4335"></div>
<div style="left:1192px;top:464px;width:27px;height:12px;background:#00a9ee"></div>
<div style="left:1192px;top:476px;width:27px;height:5px;background:#ea4335"></div>
<div style="left:1222px;top:467px;width:27px;height:6px;background:#00a9ee"></div>
<div style="left:1222px;top:473px;width:27px;height:8px;background:#ea4335"></div>
<div style="left:1252px;top:469px;width:27px;height:11px;background:#00a9ee"></div>
<div style="left:1252px;top:480px;width:27px;height:1px;background:#ea4335"></div>
<div style="left:1282px;top:463px;width:28px;height:14px;background:#00a9ee"></div>
<div style="left:1282px;top:477px;width:28px;height:4px;background:#ea4335"></div>
<div style="left:4px;top:482px;width:26px;height:1px;background:#b9b9b9"></div>
<div style="left:52px;top:482px;width:1260px;height:1px;background:#b9b9b9"></div>
<div class="t" style="left:4px;top:483px;width:23.4px;height:27px;line-height:27px;text-align:right">5</div>
<div style="left:52px;top:483px;width:538px;height:27px;background:#fff"></div>
<div style="left:591px;top:483px;width:720px;height:27px;background:#fff"></div>
<div class="t" style="left:52px;top:483px;width:79px;height:27px;line-height:27px;text-align:center;letter-spacing:0.044px">06/02/2020</div>
<div class="t" style="left:135px;top:483px;width:70px;height:27px;line-height:27px;;letter-spacing:-0.323px">Thu</div>
<div class="t" style="left:212px;top:483px;width:79px;height:27px;line-height:27px;text-align:center;letter-spacing:0.109px">00:12:02</div>
<div class="t" style="left:292px;top:483px;width:79px;height:27px;line-height:27px;text-align:center;letter-spacing:0.109px">23:40:33</div>
<div class="t" style="left:372px;top:483px;width:75px;height:27px;line-height:27px;text-align:right;letter-spacing:0.109px">23:28:30</div>
<div class="t b" style="left:451px;top:483px;width:67px;height:27px;line-height:27px;text-align:right;font-weight:bold">5:15:36</div>
<div class="t b" style="left:522px;top:483px;width:65px;height:27px;line-height:27px;text-align:right;font-weight:bold">9:48:47</div>
<div style="left:592px;top:492px;width:27px;height:10px;background:#00a9ee"></div>
<div style="left:592px;top:502px;width:27px;height:7px;background:#ea4335"></div>
<div style="left:622px;top:485px;width:27px;height:1px;background:#00a9ee"></div>
<div style="left:622px;top:486px;width:27px;height:23px;background:#ea4335"></div>
<div style="left:832px;top:484px;width:27px;height:25px;background:#ea4335"></div>
<div style="left:862px;top:496px;width:27px;height:6px;background:#00a9ee"></div>
<div style="left:862px;top:502px;width:27px;height:7px;background:#ea4335"></div>
<div style="left:892px;top:485px;width:27px;height:20px;background:#00a9ee"></div>
<div style="left:892px;top:505px;width:27px;height:4px;background:#ea4335"></div>
<div style="left:922px;top:490px;width:27px;height:6px;background:#00a9ee"></div>
<div style="left:922px;top:496px;width:27px;height:13px;background:#ea4335"></div>
<div style="left:952px;top:493px;width:27px;height:1px;background:#00a9ee"></div>
<div style="left:952px;top:494px;width:27px;height:15px;background:#ea4335"></div>
<div style="left:982px;top:485px;width:27px;height:3px;background:#00a9ee"></div>
<div style="left:982px;top:488px;width:27px;height:21px;background:#ea4335"></div>
<div style="left:1012px;top:485px;width:27px;height:1px;background:#00a9ee"></div>
<div style="left:1012px;top:486px;width:27px;height:23px;background:#ea4335"></div>
<div style="left:1042px;top:485px;width:27px;height:5px;background:#00a9ee"></div>
<div style="left:1042px;top:490px;width:27px;height:19px;background:#ea4335"></div>
<div style="left:1072px;top:485px;width:27px;height:15px;background:#00a9ee"></div>
<div style="left:1072px;top:500px;width:27px;height:9px;background:#ea4335"></div>
<div style="left:1102px;top:488px;width:27px;height:13px;background:#00a9ee"></div>
<div style="left:1102px;top:501px;width:27px;height:8px;background:#ea4335"></div>
<div style="left:1132px;top:485px;width:27px;height:3px;background:#00a9ee"></div>
<div style="left:1132px;top:488px;width:27px;height:21px;background:#ea4335"></div>
<div style="left:1162px;top:492px;width:27px;height:14px;background:#00a9ee"></div>
<div style="left:1162px;top:506px;width:27px;height:3px;background:#ea4335"></div>
<div style="left:1222px;top:485px;width:27px;height:14px;background:#00a9ee"></div>
<div style="left:1222px;top:499px;width:27px;height:10px;background:#ea4335"></div>
<div style="left:1252px;top:485px;width:27px;height:7px;background:#00a9ee"></div>
<div style="left:1252px;top:492px;width:27px;height:17px;background:#ea4335"></div>
<div style="left:1282px;top:493px;width:28px;height:4px;background:#00a9ee"></div>
<div style="left:1282px;top:497px;width:28px;height:12px;background:#ea4335"></div>
<div style="left:4px;top:510px;width:26px;height:1px;background:#b9b9b9"></div>
<div style="left:52px;top:510px;width:1260px;height:1px;background:#b9b9b9"></div>
<div style="left:4px;top:511px;width:26px;height:27px;background:#f5f5f5"></div>
<div class="t" style="left:4px;top:511px;width:23.4px;height:27px;line-height:27px;text-align:right">6</div>
<div style="left:52px;top:511px;width:538px;height:27px;background:#f8f8f8"></div>
<div style="left:591px;top:511px;width:720px;height:27px;background:#f8f8f8"></div>
<div class="t" style="left:52px;top:511px;width:79px;height:27px;line-height:27px;text-align:center;letter-spacing:0.044px">05/02/2020</div>
<div class="t" style="left:135px;top:511px;width:70px;height:27px;line-height:27px;;letter-spacing:-0.141px">Wed</div>
<div class="t" style="left:212px;top:511px;width:79px;height:27px;line-height:27px;text-align:center;letter-spacing:0.109px">00:00:08</div>
<div class="t" style="left:292px;top:511px;width:79px;height:27px;line-height:27px;text-align:center;letter-spacing:0.109px">23:57:25</div>
<div class="t" style="left:372px;top:511px;width:75px;height:27px;line-height:27px;text-align:right;letter-spacing:0.109px">23:57:16</div>
<div class="t b" style="left:451px;top:511px;width:67px;height:27px;line-height:27px;text-align:right;font-weight:bold">6:23:10</div>
<div class="t b" style="left:522px;top:511px;width:65px;height:27px;line-height:27px;text-align:right;font-weight:bold">8:56:47</div>
<div style="left:592px;top:524px;width:27px;height:3px;background:#00a9ee"></div>
<div style="left:592px;top:527px;width:27px;height:10px;background:#ea4335"></div>
<div style="left:622px;top:513px;width:27px;height:12px;background:#00a9ee"></div>
<div style="left:622px;top:525px;width:27px;height:12px;background:#ea4335"></div>
<div style="left:802px;top:513px;width:27px;height:4px;background:#00a9ee"></div>
<div style="left:802px;top:517px;width:27px;height:20px;background:#ea4335"></div>
<div style="left:862px;top:513px;width:27px;height:13px;background:#00a9ee"></div>
<div style="left:862px;top:526px;width:27px;height:11px;background:#ea4335"></div>
<div style="left:892px;top:513px;width:27px;height:19px;background:#00a9ee"></div>
<div style="left:892px;top:532px;width:27px;height:5px;background:#ea4335"></div>
<div style="left:922px;top:522px;width:27px;height:6px;background:#00a9ee"></div>
<div style="left:922px;top:528px;width:27px;height:9px;background:#ea4335"></div>
<div style="left:952px;top:517px;width:27px;height:5px;background:#00a9ee"></div>
<div style="left:952px;top:522px;width:27px;height:15px;background:#ea4335"></div>
<div style="left:982px;top:513px;width:27px;height:6px;background:#00a9ee"></div>
<div style="left:982px;top:519px;width:27px;height:18px;background:#ea4335"></div>
<div style="left:1012px;top:515px;width:27px;height:9px;background:#00a9ee"></div>
<div style="left:1012px;top:524px;width:27px;height:13px;background:#ea4335"></div>
<div style="left:1042px;top:513px;width:27px;height:12px;background:#00a9ee"></div>
<div style="left:1042px;top:525px;width:27px;height:12px;background:#ea4335"></div>
<div style="left:1072px;top:523px;width:27px;height:9px;background:#00a9ee"></div>
<div style="left:1072px;top:532px;width:27px;height:5px;background:#ea4335"></div>
<div style="left:1102px;top:516px;width:27px;height:8px;background:#00a9ee"></div>
<div style="left:1102px;top:524px;width:27px;height:13px;background:#ea4335"></div>
<div style="left:1132px;top:513px;width:27px;height:6px;background:#00a9ee"></div>
<div style="left:1132px;top:519px;width:27px;height:18px;background:#ea4335"></div>
<div style="left:1162px;top:513px;width:27px;height:8px;background:#00a9ee"></div>
<div style="left:1162px;top:521px;width:27px;height:16px;background:#ea4335"></div>
<div style="left:1192px;top:513px;width:27px;height:7px;background:#00a9ee"></div>
<div style="left:1192px;top:520px;width:27px;height:17px;background:#ea4335"></div>
<div style="left:1252px;top:513px;width:27px;height:13px;background:#00a9ee"></div>
<div style="left:1252px;top:526px;width:27px;height:11px;background:#ea4335"></div>
<div style="left:1282px;top:514px;width:28px;height:12px;background:#00a9ee"></div>
<div style="left:1282px;top:526px;width:28px;height:11px;background:#ea4335"></div>
<div style="left:4px;top:538px;width:26px;height:1px;background:#b9b9b9"></div>
<div style="left:52px;top:538px;width:1260px;height:1px;background:#b9b9b9"></div>
<div class="t" style="left:4px;top:539px;width:23.4px;height:27px;line-height:27px;text-align:right">7</div>
<div style="left:52px;top:539px;width:538px;height:27px;background:#fff"></div>
<div style="left:591px;top:539px;width:720px;height:27px;background:#fff"></div>
<div class="t" style="left:52px;top:539px;width:79px;height:27px;line-height:27px;text-align:center;letter-spacing:0.044px">04/02/2020</div>
<div class="t" style="left:135px;top:539px;width:70px;height:27px;line-height:27px;;letter-spacing:-0.282px">Tue</div>
<div class="t" style="left:212px;top:539px;width:79px;height:27px;line-height:27px;text-align:center;letter-spacing:0.109px">07:17:17</div>
<div class="t" style="left:292px;top:539px;width:79px;height:27px;line-height:27px;text-align:center;letter-spacing:0.109px">23:59:04</div>
<div class="t" style="left:372px;top:539px;width:75px;height:27px;line-height:27px;text-align:right;letter-spacing:0.109px">16:41:46</div>
<div class="t b" style="left:451px;top:539px;width:67px;height:27px;line-height:27px;text-align:right;font-weight:bold">4:29:17</div>
<div class="t b" style="left:522px;top:539px;width:65px;height:27px;line-height:27px;text-align:right;font-weight:bold">4:25:00</div>
<div style="left:802px;top:554px;width:27px;height:4px;background:#00a9ee"></div>
<div style="left:802px;top:558px;width:27px;height:7px;background:#ea4335"></div>
<div style="left:832px;top:541px;width:27px;height:12px;background:#00a9ee"></div>
<div style="left:832px;top:553px;width:27px;height:12px;background:#ea4335"></div>
<div style="left:862px;top:541px;width:27px;height:14px;background:#00a9ee"></div>
<div style="left:862px;top:555px;width:27px;height:10px;background:#ea4335"></div>
<div style="left:892px;top:541px;width:27px;height:6px;background:#00a9ee"></div>
<div style="left:892px;top:547px;width:27px;height:18px;background:#ea4335"></div>
<div style="left:952px;top:543px;width:27px;height:18px;background:#00a9ee"></div>
<div style="left:952px;top:561px;width:27px;height:4px;background:#ea4335"></div>
<div style="left:982px;top:541px;width:27px;height:11px;background:#00a9ee"></div>
<div style="left:982px;top:552px;width:27px;height:13px;background:#ea4335"></div>
<div style="left:1012px;top:544px;width:27px;height:6px;background:#00a9ee"></div>
<div style="left:1012px;top:550px;width:27px;height:15px;background:#ea4335"></div>
<div style="left:1042px;top:544px;width:27px;height:9px;background:#00a9ee"></div>
<div style="left:1042px;top:553px;width:27px;height:12px;background:#ea4335"></div>
<div style="left:1072px;top:546px;width:27px;height:4px;background:#00a9ee"></div>
<div style="left:1072px;top:550px;width:27px;height:15px;background:#ea4335"></div>
<div style="left:1282px;top:541px;width:28px;height:23px;background:#00a9ee"></div>
<div style="left:1282px;top:564px;width:28px;height:1px;background:#ea4335"></div>
<div style="left:4px;top:566px;width:26px;height:1px;background:#b9b9b9"></div>
<div style="left:52px;top:566px;width:1260px;height:1px;background:#b9b9b9"></div>
<div style="left:4px;top:567px;width:26px;height:27px;background:#f5f5f5"></div>
<div class="t" style="left:4px;top:567px;width:23.4px;height:27px;line-height:27px;text-align:right">8</div>
<div style="left:52px;top:567px;width:538px;height:27px;background:#f8f8f8"></div>
<div style="left:591px;top:567px;width:720px;height:27px;background:#f8f8f8"></div>
<div class="t" style="left:52px;top:567px;width:79px;height:27px;line-height:27px;text-align:center;letter-spacing:0.044px">03/02/2020</div>
<div class="t" style="left:135px;top:567px;width:70px;height:27px;line-height:27px;;letter-spacing:-0.569px">Mon</div>
<div class="t" style="left:212px;top:567px;width:79px;height:27px;line-height:27px;text-align:center;letter-spacing:0.109px">07:50:18</div>
<div class="t" style="left:292px;top:567px;width:79px;height:27px;line-height:27px;text-align:center;letter-spacing:0.109px">23:59:30</div>
<div class="t" style="left:372px;top:567px;width:75px;height:27px;line-height:27px;text-align:right;letter-spacing:0.211px">16:09:11</div>
<div class="t b" style="left:451px;top:567px;width:67px;height:27px;line-height:27px;text-align:right;font-weight:bold">7:49:41</div>
<div class="t b" style="left:522px;top:567px;width:65px;height:27px;line-height:27px;text-align:right;font-weight:bold">5:56:23</div>
<div style="left:802px;top:589px;width:27px;height:3px;background:#00a9ee"></div>
<div style="left:802px;top:592px;width:27px;height:1px;background:#ea4335"></div>
<div style="left:832px;top:571px;width:27px;height:12px;background:#00a9ee"></div>
<div style="left:832px;top:583px;width:27px;height:10px;background:#ea4335"></div>
<div style="left:862px;top:569px;width:27px;height:17px;background:#00a9ee"></div>
<div style="left:862px;top:586px;width:27px;height:7px;background:#ea4335"></div>
<div style="left:892px;top:571px;width:27px;height:7px;background:#00a9ee"></div>
<div style="left:892px;top:578px;width:27px;height:15px;background:#ea4335"></div>
<div style="left:922px;top:569px;width:27px;height:11px;background:#00a9ee"></div>
<div style="left:922px;top:580px;width:27px;height:13px;background:#ea4335"></div>
<div style="left:952px;top:569px;width:27px;height:18px;background:#00a9ee"></div>
<div style="left:952px;top:587px;width:27px;height:6px;background:#ea4335"></div>
<div style="left:982px;top:569px;width:27px;height:4px;background:#00a9ee"></div>
<div style="left:982px;top:573px;width:27px;height:20px;background:#ea4335"></div>
<div style="left:1012px;top:572px;width:27px;height:3px;background:#00a9ee"></div>
<div style="left:1012px;top:575px;width:27px;height:18px;background:#ea4335"></div>
<div style="left:1042px;top:579px;width:27px;height:13px;background:#00a9ee"></div>
<div style="left:1042px;top:592px;width:27px;height:1px;background:#ea4335"></div>
<div style="left:1072px;top:572px;width:27px;height:19px;background:#00a9ee"></div>
<div style="left:1072px;top:591px;width:27px;height:2px;background:#ea4335"></div>
<div style="left:1102px;top:569px;width:27px;height:16px;background:#00a9ee"></div>
<div style="left:1102px;top:585px;width:27px;height:8px;background:#ea4335"></div>
<div style="left:1132px;top:572px;width:27px;height:12px;background:#00a9ee"></div>
<div style="left:1132px;top:584px;width:27px;height:9px;background:#ea4335"></div>
<div style="left:1162px;top:572px;width:27px;height:4px;background:#00a9ee"></div>
<div style="left:1162px;top:576px;width:27px;height:17px;background:#ea4335"></div>
<div style="left:1192px;top:575px;width:27px;height:15px;background:#00a9ee"></div>
<div style="left:1192px;top:590px;width:27px;height:3px;background:#ea4335"></div>
<div style="left:1252px;top:568px;width:27px;height:25px;background:#00a9ee"></div>
<div style="left:1282px;top:573px;width:28px;height:8px;background:#00a9ee"></div>
<div style="left:1282px;top:581px;width:28px;height:12px;background:#ea4335"></div>
<div style="left:4px;top:594px;width:1308px;height:1px;background:#b9b9b9"></div>
<div class="t" style="left:4px;top:617px;width:23.4px;height:27px;line-height:27px;text-align:right">9</div>
<div style="left:52px;top:617px;width:538px;height:27px;background:#ffb6c1"></div>
<div style="left:591px;top:617px;width:720px;height:27px;background:#fff"></div>
<div class="t" style="left:52px;top:617px;width:79px;height:27px;line-height:27px;text-align:center;letter-spacing:0.044px">02/02/2020</div>
<div class="t" style="left:135px;top:617px;width:70px;height:27px;line-height:27px;;letter-spacing:-0.593px">Sun</div>
<div class="t" style="left:212px;top:617px;width:79px;height:27px;line-height:27px;text-align:center;letter-spacing:0.109px">00:00:19</div>
<div class="t" style="left:292px;top:617px;width:79px;height:27px;line-height:27px;text-align:center;letter-spacing:0.109px">23:25:53</div>
<div class="t" style="left:372px;top:617px;width:75px;height:27px;line-height:27px;text-align:right;letter-spacing:0.109px">23:25:33</div>
<div class="t b" style="left:451px;top:617px;width:67px;height:27px;line-height:27px;text-align:right;font-weight:bold">8:27:05</div>
<div class="t b" style="left:522px;top:617px;width:65px;height:27px;line-height:27px;text-align:right;font-weight:bold">25:33</div>
<div style="left:372px;top:617px;width:78px;height:27px;box-sizing:border-box;border:1px solid rgba(255,255,255,.75)"></div>
<div style="left:451px;top:617px;width:70px;height:27px;box-sizing:border-box;border:1px solid rgba(255,255,255,.75)"></div>
<div style="left:522px;top:617px;width:68px;height:27px;box-sizing:border-box;border:1px solid rgba(255,255,255,.75)"></div>
<div style="left:592px;top:618px;width:27px;height:24px;background:#00a9ee"></div>
<div style="left:592px;top:642px;width:27px;height:1px;background:#ea4335"></div>
<div style="left:862px;top:620px;width:27px;height:23px;background:#00a9ee"></div>
<div style="left:892px;top:630px;width:27px;height:12px;background:#00a9ee"></div>
<div style="left:892px;top:642px;width:27px;height:1px;background:#ea4335"></div>
<div style="left:922px;top:627px;width:27px;height:14px;background:#00a9ee"></div>
<div style="left:922px;top:641px;width:27px;height:2px;background:#ea4335"></div>
<div style="left:952px;top:642px;width:27px;height:1px;background:#00a9ee"></div>
<div style="left:982px;top:619px;width:27px;height:23px;background:#00a9ee"></div>
<div style="left:982px;top:642px;width:27px;height:1px;background:#ea4335"></div>
<div style="left:1012px;top:627px;width:27px;height:13px;background:#00a9ee"></div>
<div style="left:1012px;top:640px;width:27px;height:3px;background:#ea4335"></div>
<div style="left:1072px;top:618px;width:27px;height:25px;background:#00a9ee"></div>
<div style="left:1102px;top:618px;width:27px;height:24px;background:#00a9ee"></div>
<div style="left:1102px;top:642px;width:27px;height:1px;background:#ea4335"></div>
<div style="left:1222px;top:618px;width:27px;height:24px;background:#00a9ee"></div>
<div style="left:1222px;top:642px;width:27px;height:1px;background:#ea4335"></div>
<div style="left:1252px;top:629px;width:27px;height:13px;background:#00a9ee"></div>
<div style="left:1252px;top:642px;width:27px;height:1px;background:#ea4335"></div>
<div style="left:1282px;top:633px;width:28px;height:9px;background:#00a9ee"></div>
<div style="left:1282px;top:642px;width:28px;height:1px;background:#ea4335"></div>
<div style="left:4px;top:644px;width:26px;height:1px;background:#b9b9b9"></div>
<div style="left:52px;top:644px;width:1260px;height:1px;background:#b9b9b9"></div>
<div style="left:4px;top:645px;width:26px;height:27px;background:#f5f5f5"></div>
<div class="t" style="left:4px;top:645px;width:23.4px;height:27px;line-height:27px;text-align:right">10</div>
<div style="left:52px;top:645px;width:538px;height:27px;background:#ffffe0"></div>
<div style="left:591px;top:645px;width:720px;height:27px;background:#f8f8f8"></div>
<div style="left:591px;top:645px;width:329px;height:27px;background:#ffffe0"></div>
<div class="t" style="left:52px;top:645px;width:79px;height:27px;line-height:27px;text-align:center;letter-spacing:0.044px">01/02/2020</div>
<div class="t" style="left:135px;top:645px;width:70px;height:27px;line-height:27px;;letter-spacing:-0.172px">Sat</div>
<div class="t" style="left:212px;top:645px;width:79px;height:27px;line-height:27px;text-align:center;letter-spacing:0.211px">11:21:48</div>
<div class="t" style="left:292px;top:645px;width:79px;height:27px;line-height:27px;text-align:center;letter-spacing:0.109px">23:58:56</div>
<div class="t" style="left:372px;top:645px;width:75px;height:27px;line-height:27px;text-align:right;letter-spacing:0.109px">12:37:07</div>
<div class="t b" style="left:451px;top:645px;width:67px;height:27px;line-height:27px;text-align:right;font-weight:bold">7:55:59</div>
<div class="t b" style="left:522px;top:645px;width:65px;height:27px;line-height:27px;text-align:right;font-weight:bold">26:38</div>
<div style="left:922px;top:665px;width:27px;height:5px;background:#00a9ee"></div>
<div style="left:922px;top:670px;width:27px;height:1px;background:#ea4335"></div>
<div style="left:952px;top:651px;width:27px;height:19px;background:#00a9ee"></div>
<div style="left:952px;top:670px;width:27px;height:1px;background:#ea4335"></div>
<div style="left:982px;top:647px;width:27px;height:23px;background:#00a9ee"></div>
<div style="left:982px;top:670px;width:27px;height:1px;background:#ea4335"></div>
<div style="left:1012px;top:647px;width:27px;height:22px;background:#00a9ee"></div>
<div style="left:1012px;top:669px;width:27px;height:2px;background:#ea4335"></div>
<div style="left:1042px;top:646px;width:27px;height:24px;background:#00a9ee"></div>
<div style="left:1042px;top:670px;width:27px;height:1px;background:#ea4335"></div>
<div style="left:1072px;top:646px;width:27px;height:24px;background:#00a9ee"></div>
<div style="left:1072px;top:670px;width:27px;height:1px;background:#ea4335"></div>
<div style="left:1102px;top:655px;width:27px;height:15px;background:#00a9ee"></div>
<div style="left:1102px;top:670px;width:27px;height:1px;background:#ea4335"></div>
<div style="left:1192px;top:653px;width:27px;height:17px;background:#00a9ee"></div>
<div style="left:1192px;top:670px;width:27px;height:1px;background:#ea4335"></div>
<div style="left:1222px;top:657px;width:27px;height:13px;background:#00a9ee"></div>
<div style="left:1222px;top:670px;width:27px;height:1px;background:#ea4335"></div>
<div style="left:1252px;top:661px;width:27px;height:9px;background:#00a9ee"></div>
<div style="left:1252px;top:670px;width:27px;height:1px;background:#ea4335"></div>
<div style="left:1282px;top:649px;width:28px;height:21px;background:#00a9ee"></div>
<div style="left:1282px;top:670px;width:28px;height:1px;background:#ea4335"></div>
<div style="left:4px;top:672px;width:26px;height:1px;background:#b9b9b9"></div>
<div style="left:52px;top:672px;width:1260px;height:1px;background:#b9b9b9"></div>
<div class="t" style="left:4px;top:673px;width:23.4px;height:27px;line-height:27px;text-align:right">11</div>
<div style="left:52px;top:673px;width:538px;height:27px;background:#fff"></div>
<div style="left:591px;top:673px;width:720px;height:27px;background:#fff"></div>
<div class="t" style="left:52px;top:673px;width:79px;height:27px;line-height:27px;text-align:center;letter-spacing:0.044px">31/01/2020</div>
<div class="t" style="left:135px;top:673px;width:70px;height:27px;line-height:27px;;letter-spacing:-0.209px">Fri</div>
<div class="t" style="left:212px;top:673px;width:79px;height:27px;line-height:27px;text-align:center;letter-spacing:0.109px">00:00:01</div>
<div class="t" style="left:292px;top:673px;width:79px;height:27px;line-height:27px;text-align:center;letter-spacing:0.109px">23:59:52</div>
<div class="t" style="left:372px;top:673px;width:75px;height:27px;line-height:27px;text-align:right;letter-spacing:0.109px">23:59:50</div>
<div class="t b" style="left:451px;top:673px;width:67px;height:27px;line-height:27px;text-align:right;font-weight:bold">6:36:34</div>
<div class="t b" style="left:522px;top:673px;width:65px;height:27px;line-height:27px;text-align:right;font-weight:bold">8:13:02</div>
<div style="left:592px;top:678px;width:27px;height:14px;background:#00a9ee"></div>
<div style="left:592px;top:692px;width:27px;height:7px;background:#ea4335"></div>
<div style="left:832px;top:675px;width:27px;height:3px;background:#00a9ee"></div>
<div style="left:832px;top:678px;width:27px;height:21px;background:#ea4335"></div>
<div style="left:862px;top:675px;width:27px;height:4px;background:#00a9ee"></div>
<div style="left:862px;top:679px;width:27px;height:20px;background:#ea4335"></div>
<div style="left:892px;top:675px;width:27px;height:1px;background:#00a9ee"></div>
<div style="left:892px;top:676px;width:27px;height:23px;background:#ea4335"></div>
<div style="left:922px;top:675px;width:27px;height:1px;background:#00a9ee"></div>
<div style="left:922px;top:676px;width:27px;height:23px;background:#ea4335"></div>
<div style="left:952px;top:675px;width:27px;height:3px;background:#00a9ee"></div>
<div style="left:952px;top:678px;width:27px;height:21px;background:#ea4335"></div>
<div style="left:982px;top:675px;width:27px;height:2px;background:#00a9ee"></div>
<div style="left:982px;top:677px;width:27px;height:22px;background:#ea4335"></div>
<div style="left:1012px;top:682px;width:27px;height:6px;background:#00a9ee"></div>
<div style="left:1012px;top:688px;width:27px;height:11px;background:#ea4335"></div>
<div style="left:1042px;top:675px;width:27px;height:6px;background:#00a9ee"></div>
<div style="left:1042px;top:681px;width:27px;height:18px;background:#ea4335"></div>
<div style="left:1072px;top:675px;width:27px;height:1px;background:#00a9ee"></div>
<div style="left:1072px;top:676px;width:27px;height:23px;background:#ea4335"></div>
<div style="left:1102px;top:674px;width:27px;height:24px;background:#00a9ee"></div>
<div style="left:1102px;top:698px;width:27px;height:1px;background:#ea4335"></div>
<div style="left:1132px;top:683px;width:27px;height:15px;background:#00a9ee"></div>
<div style="left:1132px;top:698px;width:27px;height:1px;background:#ea4335"></div>
<div style="left:1162px;top:680px;width:27px;height:18px;background:#00a9ee"></div>
<div style="left:1162px;top:698px;width:27px;height:1px;background:#ea4335"></div>
<div style="left:1192px;top:685px;width:27px;height:13px;background:#00a9ee"></div>
<div style="left:1192px;top:698px;width:27px;height:1px;background:#ea4335"></div>
<div style="left:1222px;top:675px;width:27px;height:19px;background:#00a9ee"></div>
<div style="left:1222px;top:694px;width:27px;height:5px;background:#ea4335"></div>
<div style="left:1252px;top:686px;width:27px;height:12px;background:#00a9ee"></div>
<div style="left:1252px;top:698px;width:27px;height:1px;background:#ea4335"></div>
<div style="left:1282px;top:682px;width:28px;height:16px;background:#00a9ee"></div>
<div style="left:1282px;top:698px;width:28px;height:1px;background:#ea4335"></div>
<div style="left:4px;top:700px;width:26px;height:1px;background:#b9b9b9"></div>
<div style="left:52px;top:700px;width:1260px;height:1px;background:#b9b9b9"></div>
<div style="left:4px;top:701px;width:26px;height:27px;background:#f5f5f5"></div>
<div class="t" style="left:4px;top:701px;width:23.4px;height:27px;line-height:27px;text-align:right">12</div>
<div style="left:52px;top:701px;width:538px;height:27px;background:#f8f8f8"></div>
<div style="left:591px;top:701px;width:720px;height:27px;background:#f8f8f8"></div>
<div class="t" style="left:52px;top:701px;width:79px;height:27px;line-height:27px;text-align:center;letter-spacing:0.044px">30/01/2020</div>
<div class="t" style="left:135px;top:701px;width:70px;height:27px;line-height:27px;;letter-spacing:-0.323px">Thu</div>
<div class="t" style="left:212px;top:701px;width:79px;height:27px;line-height:27px;text-align:center;letter-spacing:0.109px">09:10:32</div>
<div class="t" style="left:292px;top:701px;width:79px;height:27px;line-height:27px;text-align:center;letter-spacing:0.109px">23:59:59</div>
<div class="t" style="left:372px;top:701px;width:75px;height:27px;line-height:27px;text-align:right;letter-spacing:0.109px">14:49:26</div>
<div class="t b" style="left:451px;top:701px;width:67px;height:27px;line-height:27px;text-align:right;font-weight:bold">4:45:30</div>
<div class="t b" style="left:522px;top:701px;width:65px;height:27px;line-height:27px;text-align:right;font-weight:bold">6:44:54</div>
<div style="left:862px;top:708px;width:27px;height:17px;background:#00a9ee"></div>
<div style="left:862px;top:725px;width:27px;height:2px;background:#ea4335"></div>
<div style="left:892px;top:708px;width:27px;height:7px;background:#00a9ee"></div>
<div style="left:892px;top:715px;width:27px;height:12px;background:#ea4335"></div>
<div style="left:922px;top:714px;width:27px;height:5px;background:#00a9ee"></div>
<div style="left:922px;top:719px;width:27px;height:8px;background:#ea4335"></div>
<div style="left:952px;top:722px;width:27px;height:1px;background:#00a9ee"></div>
<div style="left:952px;top:723px;width:27px;height:4px;background:#ea4335"></div>
<div style="left:982px;top:703px;width:27px;height:3px;background:#00a9ee"></div>
<div style="left:982px;top:706px;width:27px;height:21px;background:#ea4335"></div>
<div style="left:1012px;top:703px;width:27px;height:1px;background:#00a9ee"></div>
<div style="left:1012px;top:704px;width:27px;height:23px;background:#ea4335"></div>
<div style="left:1042px;top:703px;width:27px;height:3px;background:#00a9ee"></div>
<div style="left:1042px;top:706px;width:27px;height:21px;background:#ea4335"></div>
<div style="left:1072px;top:713px;width:27px;height:7px;background:#00a9ee"></div>
<div style="left:1072px;top:720px;width:27px;height:7px;background:#ea4335"></div>
<div style="left:1102px;top:703px;width:27px;height:14px;background:#00a9ee"></div>
<div style="left:1102px;top:717px;width:27px;height:10px;background:#ea4335"></div>
<div style="left:1132px;top:707px;width:27px;height:12px;background:#00a9ee"></div>
<div style="left:1132px;top:719px;width:27px;height:8px;background:#ea4335"></div>
<div style="left:1162px;top:703px;width:27px;height:18px;background:#00a9ee"></div>
<div style="left:1162px;top:721px;width:27px;height:6px;background:#ea4335"></div>
<div style="left:1222px;top:710px;width:27px;height:7px;background:#00a9ee"></div>
<div style="left:1222px;top:717px;width:27px;height:10px;background:#ea4335"></div>
<div style="left:1252px;top:703px;width:27px;height:8px;background:#00a9ee"></div>
<div style="left:1252px;top:711px;width:27px;height:16px;background:#ea4335"></div>
<div style="left:1282px;top:703px;width:28px;height:10px;background:#00a9ee"></div>
<div style="left:1282px;top:713px;width:28px;height:14px;background:#ea4335"></div>
<div style="left:4px;top:728px;width:26px;height:1px;background:#b9b9b9"></div>
<div style="left:52px;top:728px;width:1260px;height:1px;background:#b9b9b9"></div>
<div class="t" style="left:4px;top:729px;width:23.4px;height:27px;line-height:27px;text-align:right">13</div>
<div style="left:52px;top:729px;width:538px;height:27px;background:#fff"></div>
<div style="left:591px;top:729px;width:720px;height:27px;background:#fff"></div>
<div class="t" style="left:52px;top:729px;width:79px;height:27px;line-height:27px;text-align:center;letter-spacing:0.044px">29/01/2020</div>
<div class="t" style="left:135px;top:729px;width:70px;height:27px;line-height:27px;;letter-spacing:-0.141px">Wed</div>
<div class="t" style="left:212px;top:729px;width:79px;height:27px;line-height:27px;text-align:center;letter-spacing:0.109px">00:03:10</div>
<div class="t" style="left:292px;top:729px;width:79px;height:27px;line-height:27px;text-align:center;letter-spacing:0.109px">21:31:02</div>
<div class="t" style="left:372px;top:729px;width:75px;height:27px;line-height:27px;text-align:right;letter-spacing:0.109px">21:21:52</div>
<div class="t b" style="left:451px;top:729px;width:67px;height:27px;line-height:27px;text-align:right;font-weight:bold">7:17:19</div>
<div class="t b" style="left:522px;top:729px;width:65px;height:27px;line-height:27px;text-align:right;font-weight:bold">6:59:57</div>
<div style="left:592px;top:738px;width:27px;height:16px;background:#00a9ee"></div>
<div style="left:592px;top:754px;width:27px;height:1px;background:#ea4335"></div>
<div style="left:622px;top:731px;width:27px;height:21px;background:#00a9ee"></div>
<div style="left:622px;top:752px;width:27px;height:3px;background:#ea4335"></div>
<div style="left:802px;top:731px;width:27px;height:12px;background:#00a9ee"></div>
<div style="left:802px;top:743px;width:27px;height:12px;background:#ea4335"></div>
<div style="left:832px;top:731px;width:27px;height:11px;background:#00a9ee"></div>
<div style="left:832px;top:742px;width:27px;height:13px;background:#ea4335"></div>
<div style="left:862px;top:733px;width:27px;height:10px;background:#00a9ee"></div>
<div style="left:862px;top:743px;width:27px;height:12px;background:#ea4335"></div>
<div style="left:892px;top:731px;width:27px;height:5px;background:#00a9ee"></div>
<div style="left:892px;top:736px;width:27px;height:19px;background:#ea4335"></div>
<div style="left:922px;top:731px;width:27px;height:9px;background:#00a9ee"></div>
<div style="left:922px;top:740px;width:27px;height:15px;background:#ea4335"></div>
<div style="left:952px;top:739px;width:27px;height:13px;background:#00a9ee"></div>
<div style="left:952px;top:752px;width:27px;height:3px;background:#ea4335"></div>
<div style="left:982px;top:733px;width:27px;height:16px;background:#00a9ee"></div>
<div style="left:982px;top:749px;width:27px;height:6px;background:#ea4335"></div>
<div style="left:1012px;top:731px;width:27px;height:9px;background:#00a9ee"></div>
<div style="left:1012px;top:740px;width:27px;height:15px;background:#ea4335"></div>
<div style="left:1042px;top:731px;width:27px;height:13px;background:#00a9ee"></div>
<div style="left:1042px;top:744px;width:27px;height:11px;background:#ea4335"></div>
<div style="left:1072px;top:734px;width:27px;height:6px;background:#00a9ee"></div>
<div style="left:1072px;top:740px;width:27px;height:15px;background:#ea4335"></div>
<div style="left:1102px;top:747px;width:27px;height:7px;background:#00a9ee"></div>
<div style="left:1102px;top:754px;width:27px;height:1px;background:#ea4335"></div>
<div style="left:1132px;top:731px;width:27px;height:9px;background:#00a9ee"></div>
<div style="left:1132px;top:740px;width:27px;height:15px;background:#ea4335"></div>
<div style="left:1162px;top:731px;width:27px;height:2px;background:#00a9ee"></div>
<div style="left:1162px;top:733px;width:27px;height:22px;background:#ea4335"></div>
<div style="left:1192px;top:739px;width:27px;height:12px;background:#00a9ee"></div>
<div style="left:1192px;top:751px;width:27px;height:4px;background:#ea4335"></div>
<div style="left:1222px;top:748px;width:27px;height:6px;background:#00a9ee"></div>
<div style="left:1222px;top:754px;width:27px;height:1px;background:#ea4335"></div>
<div style="left:4px;top:756px;width:26px;height:1px;background:#b9b9b9"></div>
<div style="left:52px;top:756px;width:1260px;height:1px;background:#b9b9b9"></div>
<div style="left:4px;top:757px;width:26px;height:27px;background:#f5f5f5"></div>
<div class="t" style="left:4px;top:757px;width:23.4px;height:27px;line-height:27px;text-align:right">14</div>
<div style="left:52px;top:757px;width:538px;height:27px;background:#f8f8f8"></div>
<div style="left:591px;top:757px;width:720px;height:27px;background:#f8f8f8"></div>
<div class="t" style="left:52px;top:757px;width:79px;height:27px;line-height:27px;text-align:center;letter-spacing:0.044px">28/01/2020</div>
<div class="t" style="left:135px;top:757px;width:70px;height:27px;line-height:27px;;letter-spacing:-0.282px">Tue</div>
<div class="t" style="left:212px;top:757px;width:79px;height:27px;line-height:27px;text-align:center;letter-spacing:0.109px">00:00:45</div>
<div class="t" style="left:292px;top:757px;width:79px;height:27px;line-height:27px;text-align:center;letter-spacing:0.109px">23:58:29</div>
<div class="t" style="left:372px;top:757px;width:75px;height:27px;line-height:27px;text-align:right;letter-spacing:0.109px">23:57:43</div>
<div class="t b" style="left:451px;top:757px;width:67px;height:27px;line-height:27px;text-align:right;font-weight:bold">7:20:10</div>
<div class="t b" style="left:522px;top:757px;width:65px;height:27px;line-height:27px;text-align:right;font-weight:bold">7:12:37</div>
<div style="left:592px;top:769px;width:27px;height:7px;background:#00a9ee"></div>
<div style="left:592px;top:776px;width:27px;height:7px;background:#ea4335"></div>
<div style="left:622px;top:771px;width:27px;height:8px;background:#00a9ee"></div>
<div style="left:622px;top:779px;width:27px;height:4px;background:#ea4335"></div>
<div style="left:652px;top:759px;width:27px;height:6px;background:#00a9ee"></div>
<div style="left:652px;top:765px;width:27px;height:18px;background:#ea4335"></div>
<div style="left:862px;top:764px;width:27px;height:18px;background:#00a9ee"></div>
<div style="left:862px;top:782px;width:27px;height:1px;background:#ea4335"></div>
<div style="left:892px;top:775px;width:27px;height:6px;background:#00a9ee"></div>
<div style="left:892px;top:781px;width:27px;height:2px;background:#ea4335"></div>
<div style="left:922px;top:759px;width:27px;height:4px;background:#00a9ee"></div>
<div style="left:922px;top:763px;width:27px;height:20px;background:#ea4335"></div>
<div style="left:952px;top:765px;width:27px;height:13px;background:#00a9ee"></div>
<div style="left:952px;top:778px;width:27px;height:5px;background:#ea4335"></div>
<div style="left:982px;top:759px;width:27px;height:5px;background:#00a9ee"></div>
<div style="left:982px;top:764px;width:27px;height:19px;background:#ea4335"></div>
<div style="left:1012px;top:759px;width:27px;height:14px;background:#00a9ee"></div>
<div style="left:1012px;top:773px;width:27px;height:10px;background:#ea4335"></div>
<div style="left:1042px;top:762px;width:27px;height:14px;background:#00a9ee"></div>
<div style="left:1042px;top:776px;width:27px;height:7px;background:#ea4335"></div>
<div style="left:1072px;top:759px;width:27px;height:15px;background:#00a9ee"></div>
<div style="left:1072px;top:774px;width:27px;height:9px;background:#ea4335"></div>
<div style="left:1102px;top:759px;width:27px;height:8px;background:#00a9ee"></div>
<div style="left:1102px;top:767px;width:27px;height:16px;background:#ea4335"></div>
<div style="left:1132px;top:759px;width:27px;height:9px;background:#00a9ee"></div>
<div style="left:1132px;top:768px;width:27px;height:15px;background:#ea4335"></div>
<div style="left:1162px;top:759px;width:27px;height:5px;background:#00a9ee"></div>
<div style="left:1162px;top:764px;width:27px;height:19px;background:#ea4335"></div>
<div style="left:1192px;top:762px;width:27px;height:12px;background:#00a9ee"></div>
<div style="left:1192px;top:774px;width:27px;height:9px;background:#ea4335"></div>
<div style="left:1252px;top:759px;width:27px;height:14px;background:#00a9ee"></div>
<div style="left:1252px;top:773px;width:27px;height:10px;background:#ea4335"></div>
<div style="left:1282px;top:766px;width:28px;height:15px;background:#00a9ee"></div>
<div style="left:1282px;top:781px;width:28px;height:2px;background:#ea4335"></div>
<div style="left:4px;top:784px;width:26px;height:1px;background:#b9b9b9"></div>
<div style="left:52px;top:784px;width:1260px;height:1px;background:#b9b9b9"></div>
<div class="t" style="left:4px;top:785px;width:23.4px;height:27px;line-height:27px;text-align:right">15</div>
<div style="left:52px;top:785px;width:538px;height:27px;background:#fff"></div>
<div style="left:591px;top:785px;width:720px;height:27px;background:#fff"></div>
<div class="t" style="left:52px;top:785px;width:79px;height:27px;line-height:27px;text-align:center;letter-spacing:0.044px">27/01/2020</div>
<div class="t" style="left:135px;top:785px;width:70px;height:27px;line-height:27px;;letter-spacing:-0.569px">Mon</div>
<div class="t" style="left:212px;top:785px;width:79px;height:27px;line-height:27px;text-align:center;letter-spacing:0.109px">08:27:36</div>
<div class="t" style="left:292px;top:785px;width:79px;height:27px;line-height:27px;text-align:center;letter-spacing:0.109px">23:59:56</div>
<div class="t" style="left:372px;top:785px;width:75px;height:27px;line-height:27px;text-align:right;letter-spacing:0.109px">15:32:19</div>
<div class="t b" style="left:451px;top:785px;width:67px;height:27px;line-height:27px;text-align:right;font-weight:bold">4:34:18</div>
<div class="t b" style="left:522px;top:785px;width:65px;height:27px;line-height:27px;text-align:right;font-weight:bold">8:40:04</div>
<div style="left:832px;top:798px;width:27px;height:3px;background:#00a9ee"></div>
<div style="left:832px;top:801px;width:27px;height:10px;background:#ea4335"></div>
<div style="left:862px;top:787px;width:27px;height:16px;background:#00a9ee"></div>
<div style="left:862px;top:803px;width:27px;height:8px;background:#ea4335"></div>
<div style="left:892px;top:788px;width:27px;height:8px;background:#00a9ee"></div>
<div style="left:892px;top:796px;width:27px;height:15px;background:#ea4335"></div>
<div style="left:922px;top:788px;width:27px;height:10px;background:#00a9ee"></div>
<div style="left:922px;top:798px;width:27px;height:13px;background:#ea4335"></div>
<div style="left:952px;top:787px;width:27px;height:2px;background:#00a9ee"></div>
<div style="left:952px;top:789px;width:27px;height:22px;background:#ea4335"></div>
<div style="left:982px;top:787px;width:27px;height:4px;background:#00a9ee"></div>
<div style="left:982px;top:791px;width:27px;height:20px;background:#ea4335"></div>
<div style="left:1012px;top:789px;width:27px;height:7px;background:#00a9ee"></div>
<div style="left:1012px;top:796px;width:27px;height:15px;background:#ea4335"></div>
<div style="left:1042px;top:792px;width:27px;height:9px;background:#00a9ee"></div>
<div style="left:1042px;top:801px;width:27px;height:10px;background:#ea4335"></div>
<div style="left:1072px;top:787px;width:27px;height:5px;background:#00a9ee"></div>
<div style="left:1072px;top:792px;width:27px;height:19px;background:#ea4335"></div>
<div style="left:1102px;top:789px;width:27px;height:6px;background:#00a9ee"></div>
<div style="left:1102px;top:795px;width:27px;height:16px;background:#ea4335"></div>
<div style="left:1132px;top:790px;width:27px;height:2px;background:#00a9ee"></div>
<div style="left:1132px;top:792px;width:27px;height:19px;background:#ea4335"></div>
<div style="left:1162px;top:787px;width:27px;height:8px;background:#00a9ee"></div>
<div style="left:1162px;top:795px;width:27px;height:16px;background:#ea4335"></div>
<div style="left:1192px;top:790px;width:27px;height:10px;background:#00a9ee"></div>
<div style="left:1192px;top:800px;width:27px;height:11px;background:#ea4335"></div>
<div style="left:1252px;top:798px;width:27px;height:12px;background:#00a9ee"></div>
<div style="left:1252px;top:810px;width:27px;height:1px;background:#ea4335"></div>
<div style="left:1282px;top:791px;width:28px;height:5px;background:#00a9ee"></div>
<div style="left:1282px;top:796px;width:28px;height:15px;background:#ea4335"></div>
<div style="left:4px;top:812px;width:1308px;height:1px;background:#b9b9b9"></div>
<div style="left:131px;top:349px;width:1px;height:27px;background:#b9b9b9"></div>
<div style="left:131px;top:399px;width:1px;height:195px;background:#b9b9b9"></div>
<div style="left:131px;top:617px;width:1px;height:195px;background:#b9b9b9"></div>
<div style="left:211px;top:349px;width:1px;height:27px;background:#b9b9b9"></div>
<div style="left:211px;top:399px;width:1px;height:195px;background:#b9b9b9"></div>
<div style="left:211px;top:617px;width:1px;height:195px;background:#b9b9b9"></div>
<div style="left:291px;top:349px;width:1px;height:27px;background:#b9b9b9"></div>
<div style="left:291px;top:399px;width:1px;height:195px;background:#b9b9b9"></div>
<div style="left:291px;top:617px;width:1px;height:195px;background:#b9b9b9"></div>
<div style="left:371px;top:349px;width:1px;height:27px;background:#b9b9b9"></div>
<div style="left:371px;top:399px;width:1px;height:195px;background:#b9b9b9"></div>
<div style="left:371px;top:617px;width:1px;height:195px;background:#b9b9b9"></div>
<div style="left:450px;top:349px;width:1px;height:27px;background:#b9b9b9"></div>
<div style="left:450px;top:399px;width:1px;height:195px;background:#b9b9b9"></div>
<div style="left:450px;top:617px;width:1px;height:195px;background:#b9b9b9"></div>
<div style="left:521px;top:349px;width:1px;height:27px;background:#b9b9b9"></div>
<div style="left:521px;top:399px;width:1px;height:195px;background:#b9b9b9"></div>
<div style="left:521px;top:617px;width:1px;height:195px;background:#b9b9b9"></div>
<div style="left:590px;top:349px;width:1px;height:27px;background:#b9b9b9"></div>
<div style="left:590px;top:399px;width:1px;height:195px;background:#b9b9b9"></div>
<div style="left:590px;top:617px;width:1px;height:195px;background:#b9b9b9"></div>
<div style="left:620px;top:349px;width:1px;height:27px;background:#b9b9b9"></div>
<div style="left:620px;top:399px;width:1px;height:195px;background:#b9b9b9"></div>
<div style="left:620px;top:617px;width:1px;height:195px;background:#b9b9b9"></div>
<div style="left:650px;top:349px;width:1px;height:27px;background:#b9b9b9"></div>
<div style="left:650px;top:399px;width:1px;height:195px;background:#b9b9b9"></div>
<div style="left:650px;top:617px;width:1px;height:195px;background:#b9b9b9"></div>
<div style="left:680px;top:349px;width:1px;height:27px;background:#b9b9b9"></div>
<div style="left:680px;top:399px;width:1px;height:195px;background:#b9b9b9"></div>
<div style="left:680px;top:617px;width:1px;height:195px;background:#b9b9b9"></div>
<div style="left:710px;top:349px;width:1px;height:27px;background:#b9b9b9"></div>
<div style="left:710px;top:399px;width:1px;height:195px;background:#b9b9b9"></div>
<div style="left:710px;top:617px;width:1px;height:195px;background:#b9b9b9"></div>
<div style="left:740px;top:349px;width:1px;height:27px;background:#b9b9b9"></div>
<div style="left:740px;top:399px;width:1px;height:195px;background:#b9b9b9"></div>
<div style="left:740px;top:617px;width:1px;height:195px;background:#b9b9b9"></div>
<div style="left:770px;top:349px;width:1px;height:27px;background:#b9b9b9"></div>
<div style="left:770px;top:399px;width:1px;height:195px;background:#b9b9b9"></div>
<div style="left:770px;top:617px;width:1px;height:195px;background:#b9b9b9"></div>
<div style="left:800px;top:349px;width:1px;height:27px;background:#b9b9b9"></div>
<div style="left:800px;top:399px;width:1px;height:195px;background:#b9b9b9"></div>
<div style="left:800px;top:617px;width:1px;height:195px;background:#b9b9b9"></div>
<div style="left:830px;top:349px;width:1px;height:27px;background:#b9b9b9"></div>
<div style="left:830px;top:399px;width:1px;height:195px;background:#b9b9b9"></div>
<div style="left:830px;top:617px;width:1px;height:195px;background:#b9b9b9"></div>
<div style="left:860px;top:349px;width:1px;height:27px;background:#b9b9b9"></div>
<div style="left:860px;top:399px;width:1px;height:195px;background:#b9b9b9"></div>
<div style="left:860px;top:617px;width:1px;height:195px;background:#b9b9b9"></div>
<div style="left:890px;top:349px;width:1px;height:27px;background:#b9b9b9"></div>
<div style="left:890px;top:399px;width:1px;height:195px;background:#b9b9b9"></div>
<div style="left:890px;top:617px;width:1px;height:195px;background:#b9b9b9"></div>
<div style="left:920px;top:349px;width:1px;height:27px;background:#b9b9b9"></div>
<div style="left:920px;top:399px;width:1px;height:195px;background:#b9b9b9"></div>
<div style="left:920px;top:617px;width:1px;height:195px;background:#b9b9b9"></div>
<div style="left:950px;top:349px;width:1px;height:27px;background:#b9b9b9"></div>
<div style="left:950px;top:399px;width:1px;height:195px;background:#b9b9b9"></div>
<div style="left:950px;top:617px;width:1px;height:195px;background:#b9b9b9"></div>
<div style="left:980px;top:349px;width:1px;height:27px;background:#b9b9b9"></div>
<div style="left:980px;top:399px;width:1px;height:195px;background:#b9b9b9"></div>
<div style="left:980px;top:617px;width:1px;height:195px;background:#b9b9b9"></div>
<div style="left:1010px;top:349px;width:1px;height:27px;background:#b9b9b9"></div>
<div style="left:1010px;top:399px;width:1px;height:195px;background:#b9b9b9"></div>
<div style="left:1010px;top:617px;width:1px;height:195px;background:#b9b9b9"></div>
<div style="left:1040px;top:349px;width:1px;height:27px;background:#b9b9b9"></div>
<div style="left:1040px;top:399px;width:1px;height:195px;background:#b9b9b9"></div>
<div style="left:1040px;top:617px;width:1px;height:195px;background:#b9b9b9"></div>
<div style="left:1070px;top:349px;width:1px;height:27px;background:#b9b9b9"></div>
<div style="left:1070px;top:399px;width:1px;height:195px;background:#b9b9b9"></div>
<div style="left:1070px;top:617px;width:1px;height:195px;background:#b9b9b9"></div>
<div style="left:1100px;top:349px;width:1px;height:27px;background:#b9b9b9"></div>
<div style="left:1100px;top:399px;width:1px;height:195px;background:#b9b9b9"></div>
<div style="left:1100px;top:617px;width:1px;height:195px;background:#b9b9b9"></div>
<div style="left:1130px;top:349px;width:1px;height:27px;background:#b9b9b9"></div>
<div style="left:1130px;top:399px;width:1px;height:195px;background:#b9b9b9"></div>
<div style="left:1130px;top:617px;width:1px;height:195px;background:#b9b9b9"></div>
<div style="left:1160px;top:349px;width:1px;height:27px;background:#b9b9b9"></div>
<div style="left:1160px;top:399px;width:1px;height:195px;background:#b9b9b9"></div>
<div style="left:1160px;top:617px;width:1px;height:195px;background:#b9b9b9"></div>
<div style="left:1190px;top:349px;width:1px;height:27px;background:#b9b9b9"></div>
<div style="left:1190px;top:399px;width:1px;height:195px;background:#b9b9b9"></div>
<div style="left:1190px;top:617px;width:1px;height:195px;background:#b9b9b9"></div>
<div style="left:1220px;top:349px;width:1px;height:27px;background:#b9b9b9"></div>
<div style="left:1220px;top:399px;width:1px;height:195px;background:#b9b9b9"></div>
<div style="left:1220px;top:617px;width:1px;height:195px;background:#b9b9b9"></div>
<div style="left:1250px;top:349px;width:1px;height:27px;background:#b9b9b9"></div>
<div style="left:1250px;top:399px;width:1px;height:195px;background:#b9b9b9"></div>
<div style="left:1250px;top:617px;width:1px;height:195px;background:#b9b9b9"></div>
<div style="left:1280px;top:349px;width:1px;height:27px;background:#b9b9b9"></div>
<div style="left:1280px;top:399px;width:1px;height:195px;background:#b9b9b9"></div>
<div style="left:1280px;top:617px;width:1px;height:195px;background:#b9b9b9"></div>
<div style="left:1311px;top:349px;width:1px;height:27px;background:#b9b9b9"></div>
<div style="left:1311px;top:399px;width:1px;height:195px;background:#b9b9b9"></div>
<div style="left:1311px;top:617px;width:1px;height:195px;background:#b9b9b9"></div>
</body></html>
